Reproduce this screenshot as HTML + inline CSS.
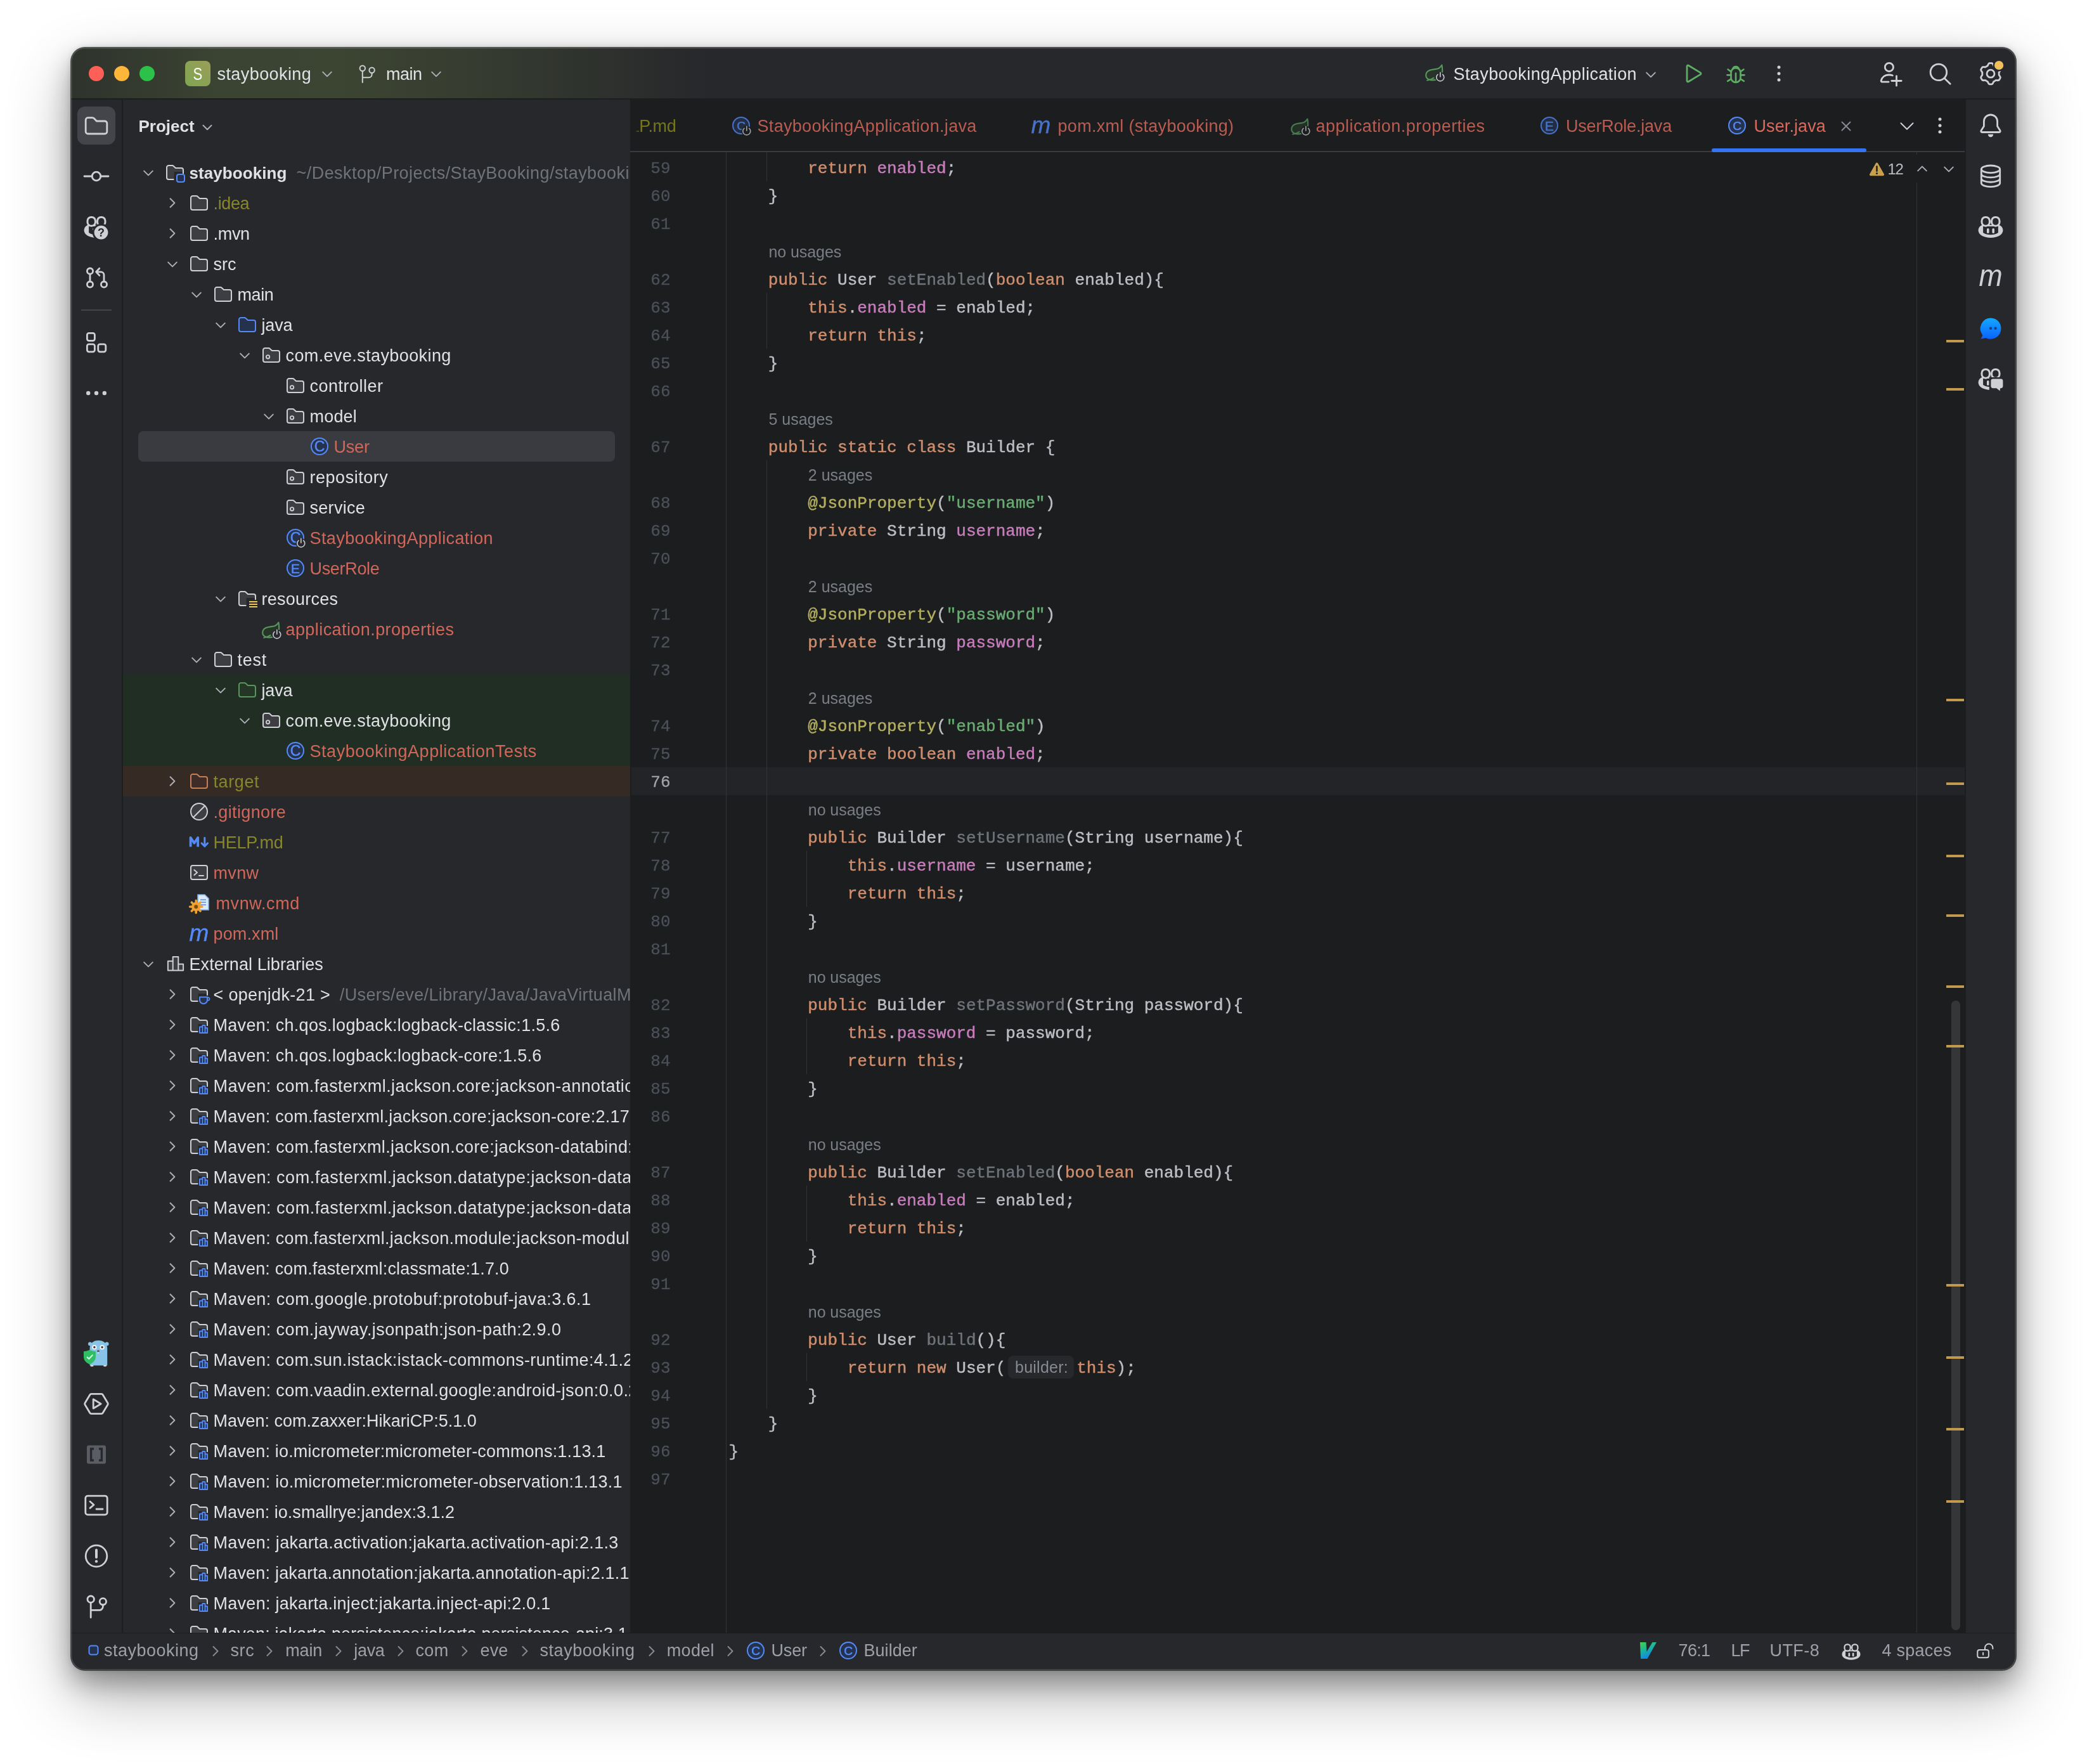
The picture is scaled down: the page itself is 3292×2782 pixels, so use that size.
<!DOCTYPE html>
<html lang="en"><head><meta charset="utf-8"><title>staybooking – User.java</title><style>
html,body{margin:0;padding:0}
body{width:3292px;height:2782px;background:#fff;position:relative;overflow:hidden}
#win{position:absolute;left:112px;top:75px;width:3068px;height:2559px;border-radius:22px;overflow:hidden;background:#27282b;
 box-shadow:0 0 0 1px rgba(0,0,0,.6),0 40px 100px rgba(0,0,0,.3),0 20px 40px rgba(0,0,0,.3),0 0 10px rgba(0,0,0,.15)}
#in{position:absolute;left:-112px;top:-75px;width:3292px;height:2782px;will-change:transform}
#rim{position:absolute;left:112px;top:75px;width:3068px;height:2559px;border-radius:22px;box-shadow:inset 0 0 0 1.500px rgba(255,255,255,.17);pointer-events:none}
.b{position:absolute}
.t{position:absolute;white-space:pre}
.i{position:absolute;overflow:visible}
.c{font:26px/44px "Liberation Mono",monospace;-webkit-text-stroke:.45px}
.n{font:26px/44px "Liberation Mono",monospace;text-align:right;-webkit-text-stroke:.3px}
</style></head>
<body>
<div id="win"><div id="in">
<div class="b" style="left:112px;top:75px;width:3068px;height:81px;background:linear-gradient(90deg,#2e332c 0px,#3b4332 230px,#3c4432 420px,#363c30 640px,#27282b 1000px);"></div>
<div class="b" style="left:112px;top:155px;width:3068px;height:2px;background:#1c1d1f;"></div>
<div class="b" style="left:140px;top:104px;width:24px;height:24px;background:#fe5f57;border-radius:50%"></div>
<div class="b" style="left:180px;top:104px;width:24px;height:24px;background:#fdb53a;border-radius:50%"></div>
<div class="b" style="left:220px;top:104px;width:24px;height:24px;background:#2cc24a;border-radius:50%"></div>
<div class="b" style="left:292px;top:96px;width:40px;height:40px;background:linear-gradient(45deg,#7ea552 0%,#9a9e58 100%);border-radius:8px"></div>
<span class="t" style="left:302.5px;top:96.5px;line-height:40px;font:400 27px/40px 'Liberation Sans', sans-serif;color:#ffffff;letter-spacing:0.32px;transform:scaleX(.82);transform-origin:9px 50%;">S</span>
<span class="t" style="left:342.5px;top:92.5px;line-height:48px;font:400 27px/48px 'Liberation Sans', sans-serif;color:#dfe1e5;letter-spacing:0.42px;">staybooking</span>
<svg class="i" style="left:504.0px;top:105.0px" width="24" height="24" viewBox="0 0 24 24"><path d="M5.2 8.6L12 15.4L18.8 8.6" fill="none" stroke="#acafb6" stroke-width="2" stroke-linecap="round" stroke-linejoin="round"/></svg>
<svg class="i" style="left:563.0px;top:100.5px" width="32" height="32" viewBox="0 0 16 16"><circle cx="4.400" cy="3.400" r="2.100" fill="none" stroke="#ced0d6" stroke-width="1"/><circle cx="11.800" cy="4.900" r="2.100" fill="none" stroke="#ced0d6" stroke-width="1"/><path d="M4.400 5.500v9M11.800 7v1.200a2.400 2.400 0 0 1-2.400 2.400H4.400" fill="none" stroke="#ced0d6" stroke-width="1" stroke-linecap="round"/></svg>
<span class="t" style="left:609.0px;top:92.5px;line-height:48px;font:400 27px/48px 'Liberation Sans', sans-serif;color:#dfe1e5;letter-spacing:-0.48px;">main</span>
<svg class="i" style="left:676.0px;top:105.0px" width="24" height="24" viewBox="0 0 24 24"><path d="M5.2 8.6L12 15.4L18.8 8.6" fill="none" stroke="#acafb6" stroke-width="2" stroke-linecap="round" stroke-linejoin="round"/></svg>
<svg class="i" style="left:2247.0px;top:97.0px" width="36" height="36" viewBox="0 0 18 18"><g transform="translate(-.3 .9) scale(1.06)"><path d="M13.2 1.8c.4 2.4.9 5.2-.3 7.6-1.2 2.5-4 3.7-7 3.6-1.4 0-2.8-.4-3.6-1.2C.9 10.400 1 8.200 2.400 6.700 4.300 4.700 8 5.300 10.600 4.300c1.200-.5 2-1.400 2.600-2.500z" fill="#28332a" stroke="#57965c" stroke-width="1" stroke-linejoin="round"/><path d="M2.300 13.2c1.800-.2 3.400-.8 4.800-1.800" fill="none" stroke="#57965c" stroke-width="1" stroke-linecap="round"/></g><circle cx="12.400" cy="12.450" r="4.100" fill="#27282b"/><path d="M10.470 10.150a3 3 0 1 0 3.860 0" fill="none" stroke="#c3c5cb" stroke-width=".850" stroke-linecap="round"/><path d="M12.400 8.700v3.300" stroke="#c3c5cb" stroke-width=".850" stroke-linecap="round"/></svg>
<span class="t" style="left:2292.5px;top:92.5px;line-height:48px;font:400 27px/48px 'Liberation Sans', sans-serif;color:#dfe1e5;letter-spacing:0.40px;">StaybookingApplication</span>
<svg class="i" style="left:2592.0px;top:106.0px" width="24" height="24" viewBox="0 0 24 24"><path d="M5.2 8.6L12 15.4L18.8 8.6" fill="none" stroke="#acafb6" stroke-width="2" stroke-linecap="round" stroke-linejoin="round"/></svg>
<svg class="i" style="left:2651.0px;top:96.0px" width="40" height="40" viewBox="0 0 20 20"><path d="M5 4.300v11.400a.800.800 0 0 0 1.200.700l9.400-5.700a.800.800 0 0 0 0-1.400L6.200 3.600A.800.800 0 0 0 5 4.300z" fill="none" stroke="#5fad65" stroke-width="1.400" stroke-linejoin="round"/></svg>
<svg class="i" style="left:2718.0px;top:96.5px" width="40" height="40" viewBox="0 0 20 20"><g transform="translate(.6 .8) scale(.94)"><path d="M6 8.500a4 4 0 0 1 8 0v4.200a4 4 0 0 1-8 0z" fill="none" stroke="#5fad65" stroke-width="1.400" stroke-linecap="round" stroke-linejoin="round"/><path d="M7.400 5.400a2.700 2.700 0 0 1 5.200 0" fill="none" stroke="#5fad65" stroke-width="1.400" stroke-linecap="round" stroke-linejoin="round"/><path d="M10 9v7.500M6 10.500H2.800M6 13.800l-2.800 1.800M6 7.600L3.400 5.800M14 10.500h3.200M14 13.800l2.800 1.800M14 7.600l2.600-1.800" fill="none" stroke="#5fad65" stroke-width="1.400" stroke-linecap="round" stroke-linejoin="round"/></g></svg>
<svg class="i" style="left:2786.0px;top:96.0px" width="40" height="40" viewBox="0 0 20 20"><circle cx="10" cy="5" r="1.250" fill="#ced0d6"/><circle cx="10" cy="10" r="1.250" fill="#ced0d6"/><circle cx="10" cy="15" r="1.250" fill="#ced0d6"/></svg>
<svg class="i" style="left:2963.0px;top:96.0px" width="40" height="40" viewBox="0 0 20 20"><circle cx="8.450" cy="4.950" r="3.300" fill="none" stroke="#ced0d6" stroke-width="1.400" stroke-linecap="round" stroke-linejoin="round"/><path d="M8 16.600H2.900a.800.800 0 0 1-.800-.950C2.700 13 5 11 8.450 11c1 0 1.900.180 2.700.500" fill="none" stroke="#ced0d6" stroke-width="1.400" stroke-linecap="round" stroke-linejoin="round"/><path d="M14.250 11.900v7.700M10.400 15.750h7.700" fill="none" stroke="#ced0d6" stroke-width="1.400" stroke-linecap="round" stroke-linejoin="round"/></svg>
<svg class="i" style="left:3041.0px;top:96.0px" width="40" height="40" viewBox="0 0 20 20"><circle cx="8.450" cy="8.950" r="6.400" fill="none" stroke="#ced0d6" stroke-width="1.400" stroke-linecap="round" stroke-linejoin="round"/><path d="M13.100 13.700l4.500 4.400" fill="none" stroke="#ced0d6" stroke-width="1.400" stroke-linecap="round" stroke-linejoin="round"/></svg>
<svg class="i" style="left:3120.0px;top:96.0px" width="40" height="40" viewBox="0 0 20 20"><path d="M10.00 1.80L10.36 1.81L10.72 1.83L11.08 1.87L11.41 2.09L11.69 2.48L11.93 2.90L12.13 3.33L12.32 3.74L12.53 4.00L12.79 4.12L13.05 4.25L13.30 4.38L13.55 4.53L13.79 4.69L14.02 4.86L14.35 4.91L14.80 4.87L15.27 4.83L15.75 4.83L16.23 4.87L16.58 5.05L16.80 5.34L17.00 5.64L17.19 5.95L17.36 6.27L17.52 6.59L17.67 6.92L17.64 7.32L17.44 7.75L17.20 8.17L16.93 8.56L16.67 8.92L16.54 9.24L16.57 9.52L16.59 9.81L16.60 10.10L16.59 10.39L16.57 10.68L16.54 10.96L16.67 11.28L16.93 11.64L17.20 12.03L17.44 12.45L17.64 12.88L17.67 13.28L17.52 13.61L17.36 13.93L17.19 14.25L17.00 14.56L16.80 14.86L16.58 15.15L16.23 15.33L15.75 15.37L15.27 15.37L14.80 15.33L14.35 15.29L14.02 15.34L13.79 15.51L13.55 15.67L13.30 15.82L13.05 15.95L12.79 16.08L12.53 16.20L12.32 16.46L12.13 16.87L11.93 17.30L11.69 17.72L11.41 18.11L11.08 18.33L10.72 18.37L10.36 18.39L10.00 18.40L9.64 18.39L9.28 18.37L8.92 18.33L8.59 18.11L8.31 17.72L8.07 17.30L7.87 16.87L7.68 16.46L7.47 16.20L7.21 16.08L6.95 15.95L6.70 15.82L6.45 15.67L6.21 15.51L5.98 15.34L5.65 15.29L5.20 15.33L4.73 15.37L4.25 15.37L3.77 15.33L3.42 15.15L3.20 14.86L3.00 14.56L2.81 14.25L2.64 13.93L2.48 13.61L2.33 13.28L2.36 12.88L2.56 12.45L2.80 12.03L3.07 11.64L3.33 11.28L3.46 10.96L3.43 10.68L3.41 10.39L3.40 10.10L3.41 9.81L3.43 9.52L3.46 9.24L3.33 8.92L3.07 8.56L2.80 8.17L2.56 7.75L2.36 7.32L2.33 6.92L2.48 6.59L2.64 6.27L2.81 5.95L3.00 5.64L3.20 5.34L3.42 5.05L3.77 4.87L4.25 4.83L4.73 4.83L5.20 4.87L5.65 4.91L5.98 4.86L6.21 4.69L6.45 4.53L6.70 4.38L6.95 4.25L7.21 4.12L7.47 4.00L7.68 3.74L7.87 3.33L8.07 2.90L8.31 2.48L8.59 2.09L8.92 1.87L9.28 1.83L9.64 1.81z" fill="none" stroke="#ced0d6" stroke-width="1.400" stroke-linecap="round" stroke-linejoin="round"/><circle cx="10" cy="10.100" r="3" fill="none" stroke="#ced0d6" stroke-width="1.400" stroke-linecap="round" stroke-linejoin="round"/><circle cx="16.550" cy="3.500" r="4.750" fill="#27282b"/><circle cx="16.550" cy="3.500" r="3.550" fill="#f2c05c"/></svg>
<div class="b" style="left:112px;top:157px;width:81px;height:2418px;background:#27282b;"></div>
<div class="b" style="left:192px;top:157px;width:2px;height:2418px;background:#1c1d1f;"></div>
<div class="b" style="left:122px;top:168px;width:60px;height:60px;background:#43454a;border-radius:12px"></div>
<svg class="i" style="left:132.0px;top:178.0px" width="40" height="40" viewBox="0 0 20 20"><path d="M1.600 5.600A1.800 1.800 0 0 1 3.400 3.800h3.500a1.800 1.800 0 0 1 1.300.56L10.200 6.500h6.400A1.800 1.800 0 0 1 18.400 8.300v6.400a1.800 1.800 0 0 1-1.800 1.800H3.400a1.800 1.800 0 0 1-1.800-1.800z" fill="none" stroke="#ced0d6" stroke-width="1.400" stroke-linecap="round" stroke-linejoin="round"/></svg>
<svg class="i" style="left:132.0px;top:258.0px" width="40" height="40" viewBox="0 0 20 20"><circle cx="10" cy="10" r="3.400" fill="none" stroke="#ced0d6" stroke-width="1.400" stroke-linecap="round" stroke-linejoin="round"/><path d="M0.500 10h6.100M13.400 10h6.100" fill="none" stroke="#ced0d6" stroke-width="1.400" stroke-linecap="round" stroke-linejoin="round"/></svg>
<svg class="i" style="left:132.0px;top:338.0px" width="40" height="40" viewBox="0 0 20 20"><path d="M.300 12.600C.300 10.600 1.600 9.200 3.200 8.400H16.800C18.400 9.200 19.700 10.600 19.700 12.600 19.700 16 15.500 18.450 10 18.450S.300 16 .300 12.600z" fill="#ced0d6"/><path d="M4.050 9.500H15.950V14.550C14.300 15.600 12.200 16.150 10 16.150S5.700 15.600 4.050 14.550z" fill="#27282b"/><rect x="7" y="10.950" width="1.800" height="4.050" rx=".900" fill="#ced0d6"/><rect x="3" y="2.200" width="6.200" height="6.900" rx="2.900" fill="#27282b" stroke="#ced0d6" stroke-width="1.500"/><rect x="10.800" y="2.200" width="6.200" height="6.900" rx="2.900" fill="#27282b" stroke="#ced0d6" stroke-width="1.500"/><circle cx="13.750" cy="14.300" r="6.900" fill="#27282b"/><circle cx="13.750" cy="14.300" r="5.450" fill="#ced0d6"/><text x="13.750" y="17.500" font-family="Liberation Sans, sans-serif" font-weight="700" font-size="9" text-anchor="middle" fill="#27282b">?</text></svg>
<svg class="i" style="left:132.0px;top:418.0px" width="40" height="40" viewBox="0 0 20 20"><circle cx="5" cy="4.800" r="2.300" fill="none" stroke="#ced0d6" stroke-width="1.400" stroke-linecap="round" stroke-linejoin="round"/><circle cx="5" cy="15.300" r="2.300" fill="none" stroke="#ced0d6" stroke-width="1.400" stroke-linecap="round" stroke-linejoin="round"/><circle cx="16" cy="15.300" r="2.300" fill="none" stroke="#ced0d6" stroke-width="1.400" stroke-linecap="round" stroke-linejoin="round"/><path d="M5 7.100v5.900M16 13v-5.200a2.400 2.400 0 0 0-2.400-2.400h-3.400M12.400 2.600L9.800 5.400l2.600 2.800" fill="none" stroke="#ced0d6" stroke-width="1.400" stroke-linecap="round" stroke-linejoin="round"/></svg>
<div class="b" style="left:128px;top:488px;width:48px;height:2px;background:#43454a;"></div>
<svg class="i" style="left:132.0px;top:520.0px" width="40" height="40" viewBox="0 0 20 20"><rect x="2.700" y="2.700" width="6" height="6" rx="1.400" fill="none" stroke="#ced0d6" stroke-width="1.400" stroke-linecap="round" stroke-linejoin="round"/><rect x="2.700" y="11.400" width="6" height="6" rx="1.400" fill="none" stroke="#ced0d6" stroke-width="1.400" stroke-linecap="round" stroke-linejoin="round"/><rect x="11.400" y="11.400" width="6" height="6" rx="1.400" fill="none" stroke="#ced0d6" stroke-width="1.400" stroke-linecap="round" stroke-linejoin="round"/></svg>
<svg class="i" style="left:132.0px;top:600.0px" width="40" height="40" viewBox="0 0 20 20"><circle cx="3.6" cy="10" r="1.600" fill="#ced0d6"/><circle cx="10" cy="10" r="1.600" fill="#ced0d6"/><circle cx="16.4" cy="10" r="1.600" fill="#ced0d6"/></svg>
<svg class="i" style="left:132.0px;top:2114.0px" width="40" height="40" viewBox="0 0 20 20"><circle cx="5" cy="2.700" r="1.500" fill="#87c4e8"/><circle cx="18.300" cy="2.700" r="1.500" fill="#87c4e8"/><path d="M4.800 19.800V6.400c0-4 2.600-6.400 6.800-6.400s7 2.400 7 6.400v13.400z" fill="#87c4e8"/><ellipse cx="6.500" cy="20" rx="1.300" ry=".600" fill="#e8d5c8"/><ellipse cx="16.800" cy="20" rx="1.300" ry=".600" fill="#e8d5c8"/><circle cx="8.450" cy="5.350" r="1.900" fill="#f1f1f1"/><circle cx="14.550" cy="5.350" r="1.900" fill="#f1f1f1"/><circle cx="8.450" cy="5.350" r=".850" fill="#3a3a3a"/><circle cx="14.550" cy="5.350" r=".850" fill="#3a3a3a"/><ellipse cx="11.500" cy="8.400" rx="1" ry=".750" fill="#6b4a3a"/><rect x="10.900" y="9.200" width="1.200" height="1.300" rx=".300" fill="#b5dcf3"/><path d="M0 8.600c1.800-.1 3.400-.500 4.750-1.200 1.350.700 2.900 1.100 4.700 1.200v4.200c0 2.800-1.800 4.900-4.700 6.100C1.800 17.700 0 15.600 0 12.800z" fill="#2ebe64"/><path d="M2.900 13.300l1.300 1.200 2.700-2.900" fill="none" stroke="#d8f5e2" stroke-width="1.100" stroke-linecap="round"/></svg>
<svg class="i" style="left:132.0px;top:2194.0px" width="40" height="40" viewBox="0 0 20 20"><path d="M6 2.200h8a1.300 1.300 0 0 1 1.100.65l3.900 6.500a1.300 1.300 0 0 1 0 1.300l-3.900 6.500a1.300 1.300 0 0 1-1.100.65h-8a1.300 1.300 0 0 1-1.100-.65L1 10.650a1.300 1.300 0 0 1 0-1.300l3.900-6.500A1.300 1.300 0 0 1 6 2.200z" fill="none" stroke="#ced0d6" stroke-width="1.400" stroke-linecap="round" stroke-linejoin="round"/><path d="M7.600 6.400v7.200L13.600 10z" fill="none" stroke="#ced0d6" stroke-width="1.400" stroke-linecap="round" stroke-linejoin="round"/></svg>
<svg class="i" style="left:132.0px;top:2274.0px" width="40" height="40" viewBox="0 0 20 20"><rect x="2.500" y="2.700" width="15" height="14.600" rx="1.500" fill="#5a5d63"/><path d="M8 5.500H5.800v9H8M12 5.500h2.200v9H12" fill="none" stroke="#27282b" stroke-width="1.700"/></svg>
<svg class="i" style="left:132.0px;top:2354.0px" width="40" height="40" viewBox="0 0 20 20"><rect x="1.400" y="2.600" width="17.200" height="14.800" rx="1.800" fill="none" stroke="#ced0d6" stroke-width="1.400" stroke-linecap="round" stroke-linejoin="round"/><path d="M5 7l3 2.600L5 12.200M10 13h5" fill="none" stroke="#ced0d6" stroke-width="1.400" stroke-linecap="round" stroke-linejoin="round"/></svg>
<svg class="i" style="left:132.0px;top:2434.0px" width="40" height="40" viewBox="0 0 20 20"><circle cx="10" cy="10" r="8.400" fill="none" stroke="#ced0d6" stroke-width="1.400" stroke-linecap="round" stroke-linejoin="round"/><path d="M10 5.300v5.700" fill="none" stroke="#ced0d6" stroke-width="2" stroke-linecap="round"/><circle cx="10" cy="14.200" r="1.100" fill="#ced0d6"/></svg>
<svg class="i" style="left:132.0px;top:2513.0px" width="40" height="40" viewBox="0 0 20 20"><circle cx="5.600" cy="4.600" r="2.600" fill="none" stroke="#ced0d6" stroke-width="1.400" stroke-linecap="round" stroke-linejoin="round"/><circle cx="15.200" cy="6.400" r="2.600" fill="none" stroke="#ced0d6" stroke-width="1.400" stroke-linecap="round" stroke-linejoin="round"/><path d="M5.600 7.200V19M15.200 9v1.200a3 3 0 0 1-3 3H5.600" fill="none" stroke="#ced0d6" stroke-width="1.400" stroke-linecap="round" stroke-linejoin="round"/></svg>
<div class="b" style="left:194px;top:157px;width:800px;height:2418px;background:#27282b;overflow:hidden"><div style="position:absolute;left:-194px;top:-157px">
<span class="t" style="left:218.5px;top:175.0px;line-height:48px;font:700 26px/48px 'Liberation Sans', sans-serif;color:#dfe1e5;letter-spacing:0.01px;">Project</span>
<svg class="i" style="left:315.0px;top:188.5px" width="24" height="24" viewBox="0 0 24 24"><path d="M5.5 8.75L12 15.25L18.5 8.75" fill="none" stroke="#acafb6" stroke-width="2" stroke-linecap="round" stroke-linejoin="round"/></svg>
<svg class="i" style="left:222.0px;top:260.5px" width="24" height="24" viewBox="0 0 24 24"><path d="M5.2 8.6L12 15.4L18.8 8.6" fill="none" stroke="#acafb6" stroke-width="2" stroke-linecap="round" stroke-linejoin="round"/></svg>
<svg class="i" style="left:260.0px;top:256.0px" width="32" height="32" viewBox="0 0 16 16"><path d="M1.5 4A1.5 1.5 0 0 1 3 2.5h2.8a1.5 1.5 0 0 1 1.1.48L8.5 4.5H13A1.5 1.5 0 0 1 14.5 6v1.500H7.300v6H3A1.5 1.5 0 0 1 1.5 12z" fill="#3c3e42"/><path d="M6.800 13.5H3A1.5 1.5 0 0 1 1.5 12V4A1.5 1.5 0 0 1 3 2.5h2.8a1.5 1.5 0 0 1 1.1.48L8.5 4.5H13A1.5 1.5 0 0 1 14.5 6v2.600" fill="none" stroke="#ced0d6" stroke-width="1" stroke-linecap="round"/><rect x="9.5" y="9.5" width="6" height="6" rx="1.5" fill="#25324d" stroke="#548af7" stroke-width="1"/></svg>
<span class="t" style="left:298.5px;top:249.3px;line-height:48px;font:700 26px/48px 'Liberation Sans', sans-serif;color:#dfe1e5;letter-spacing:0.08px;">staybooking</span>
<span class="t" style="left:467.6px;top:249.3px;line-height:48px;font:400 27px/48px 'Liberation Sans', sans-serif;color:#6f737a;letter-spacing:0.43px;">~/Desktop/Projects/StayBooking/staybooking</span>
<svg class="i" style="left:259.6px;top:308.3px" width="24" height="24" viewBox="0 0 24 24"><path d="M8.6 5.2L15.4 12L8.6 18.8" fill="none" stroke="#acafb6" stroke-width="2" stroke-linecap="round" stroke-linejoin="round"/></svg>
<svg class="i" style="left:298.0px;top:304.0px" width="32" height="32" viewBox="0 0 16 16"><path d="M1.5 4A1.5 1.5 0 0 1 3 2.5h2.8a1.5 1.5 0 0 1 1.1.48L8.5 4.5H13A1.5 1.5 0 0 1 14.5 6v6a1.5 1.5 0 0 1-1.5 1.5H3A1.5 1.5 0 0 1 1.5 12z" fill="#3c3e42" stroke="#ced0d6" stroke-width="1"/></svg>
<span class="t" style="left:336.5px;top:297.3px;line-height:48px;font:400 27px/48px 'Liberation Sans', sans-serif;color:#87862a;letter-spacing:-0.37px;">.idea</span>
<svg class="i" style="left:259.6px;top:356.3px" width="24" height="24" viewBox="0 0 24 24"><path d="M8.6 5.2L15.4 12L8.6 18.8" fill="none" stroke="#acafb6" stroke-width="2" stroke-linecap="round" stroke-linejoin="round"/></svg>
<svg class="i" style="left:298.0px;top:352.0px" width="32" height="32" viewBox="0 0 16 16"><path d="M1.5 4A1.5 1.5 0 0 1 3 2.5h2.8a1.5 1.5 0 0 1 1.1.48L8.5 4.5H13A1.5 1.5 0 0 1 14.5 6v6a1.5 1.5 0 0 1-1.5 1.5H3A1.5 1.5 0 0 1 1.5 12z" fill="#3c3e42" stroke="#ced0d6" stroke-width="1"/></svg>
<span class="t" style="left:336.5px;top:345.3px;line-height:48px;font:400 27px/48px 'Liberation Sans', sans-serif;color:#dfe1e5;letter-spacing:-0.30px;">.mvn</span>
<svg class="i" style="left:260.0px;top:404.5px" width="24" height="24" viewBox="0 0 24 24"><path d="M5.2 8.6L12 15.4L18.8 8.6" fill="none" stroke="#acafb6" stroke-width="2" stroke-linecap="round" stroke-linejoin="round"/></svg>
<svg class="i" style="left:298.0px;top:400.0px" width="32" height="32" viewBox="0 0 16 16"><path d="M1.5 4A1.5 1.5 0 0 1 3 2.5h2.8a1.5 1.5 0 0 1 1.1.48L8.5 4.5H13A1.5 1.5 0 0 1 14.5 6v6a1.5 1.5 0 0 1-1.5 1.5H3A1.5 1.5 0 0 1 1.5 12z" fill="#3c3e42" stroke="#ced0d6" stroke-width="1"/></svg>
<span class="t" style="left:336.5px;top:393.3px;line-height:48px;font:400 27px/48px 'Liberation Sans', sans-serif;color:#dfe1e5;letter-spacing:0.00px;">src</span>
<svg class="i" style="left:298.0px;top:452.5px" width="24" height="24" viewBox="0 0 24 24"><path d="M5.2 8.6L12 15.4L18.8 8.6" fill="none" stroke="#acafb6" stroke-width="2" stroke-linecap="round" stroke-linejoin="round"/></svg>
<svg class="i" style="left:336.0px;top:448.0px" width="32" height="32" viewBox="0 0 16 16"><path d="M1.5 4A1.5 1.5 0 0 1 3 2.5h2.8a1.5 1.5 0 0 1 1.1.48L8.5 4.5H13A1.5 1.5 0 0 1 14.5 6v6a1.5 1.5 0 0 1-1.5 1.5H3A1.5 1.5 0 0 1 1.5 12z" fill="#3c3e42" stroke="#ced0d6" stroke-width="1"/></svg>
<span class="t" style="left:374.5px;top:441.3px;line-height:48px;font:400 27px/48px 'Liberation Sans', sans-serif;color:#dfe1e5;letter-spacing:-0.38px;">main</span>
<svg class="i" style="left:336.0px;top:500.5px" width="24" height="24" viewBox="0 0 24 24"><path d="M5.2 8.6L12 15.4L18.8 8.6" fill="none" stroke="#acafb6" stroke-width="2" stroke-linecap="round" stroke-linejoin="round"/></svg>
<svg class="i" style="left:374.0px;top:496.0px" width="32" height="32" viewBox="0 0 16 16"><path d="M1.5 4A1.5 1.5 0 0 1 3 2.5h2.8a1.5 1.5 0 0 1 1.1.48L8.5 4.5H13A1.5 1.5 0 0 1 14.5 6v6a1.5 1.5 0 0 1-1.5 1.5H3A1.5 1.5 0 0 1 1.5 12z" fill="#25324d" stroke="#548af7" stroke-width="1"/></svg>
<span class="t" style="left:412.5px;top:489.3px;line-height:48px;font:400 27px/48px 'Liberation Sans', sans-serif;color:#dfe1e5;letter-spacing:-0.13px;">java</span>
<svg class="i" style="left:374.0px;top:548.5px" width="24" height="24" viewBox="0 0 24 24"><path d="M5.2 8.6L12 15.4L18.8 8.6" fill="none" stroke="#acafb6" stroke-width="2" stroke-linecap="round" stroke-linejoin="round"/></svg>
<svg class="i" style="left:412.0px;top:544.0px" width="32" height="32" viewBox="0 0 16 16"><path d="M1.5 4A1.5 1.5 0 0 1 3 2.5h2.8a1.5 1.5 0 0 1 1.1.48L8.5 4.5H13A1.5 1.5 0 0 1 14.5 6v6a1.5 1.5 0 0 1-1.5 1.5H3A1.5 1.5 0 0 1 1.5 12z" fill="#3c3e42" stroke="#ced0d6" stroke-width="1"/><circle cx="5.3" cy="9.4" r="1.35" fill="none" stroke="#ced0d6" stroke-width="0.9"/></svg>
<span class="t" style="left:450.5px;top:537.3px;line-height:48px;font:400 27px/48px 'Liberation Sans', sans-serif;color:#dfe1e5;letter-spacing:0.40px;">com.eve.staybooking</span>
<svg class="i" style="left:450.0px;top:592.0px" width="32" height="32" viewBox="0 0 16 16"><path d="M1.5 4A1.5 1.5 0 0 1 3 2.5h2.8a1.5 1.5 0 0 1 1.1.48L8.5 4.5H13A1.5 1.5 0 0 1 14.5 6v6a1.5 1.5 0 0 1-1.5 1.5H3A1.5 1.5 0 0 1 1.5 12z" fill="#3c3e42" stroke="#ced0d6" stroke-width="1"/><circle cx="5.3" cy="9.4" r="1.35" fill="none" stroke="#ced0d6" stroke-width="0.9"/></svg>
<span class="t" style="left:488.5px;top:585.3px;line-height:48px;font:400 27px/48px 'Liberation Sans', sans-serif;color:#dfe1e5;letter-spacing:0.50px;">controller</span>
<svg class="i" style="left:412.0px;top:644.5px" width="24" height="24" viewBox="0 0 24 24"><path d="M5.2 8.6L12 15.4L18.8 8.6" fill="none" stroke="#acafb6" stroke-width="2" stroke-linecap="round" stroke-linejoin="round"/></svg>
<svg class="i" style="left:450.0px;top:640.0px" width="32" height="32" viewBox="0 0 16 16"><path d="M1.5 4A1.5 1.5 0 0 1 3 2.5h2.8a1.5 1.5 0 0 1 1.1.48L8.5 4.5H13A1.5 1.5 0 0 1 14.5 6v6a1.5 1.5 0 0 1-1.5 1.5H3A1.5 1.5 0 0 1 1.5 12z" fill="#3c3e42" stroke="#ced0d6" stroke-width="1"/><circle cx="5.3" cy="9.4" r="1.35" fill="none" stroke="#ced0d6" stroke-width="0.9"/></svg>
<span class="t" style="left:488.5px;top:633.3px;line-height:48px;font:400 27px/48px 'Liberation Sans', sans-serif;color:#dfe1e5;letter-spacing:0.19px;">model</span>
<div class="b" style="left:218px;top:680px;width:752px;height:48px;background:#393b40;border-radius:8px"></div>
<svg class="i" style="left:488.0px;top:688.0px" width="32" height="32" viewBox="0 0 16 16"><circle cx="8" cy="8" r="6.5" fill="#25324d" stroke="#548af7" stroke-width="1"/><text x="8.05" y="12.1" font-family="Liberation Sans, sans-serif" font-size="11.5" text-anchor="middle" fill="#548af7" stroke="#548af7" stroke-width=".25">C</text></svg>
<span class="t" style="left:526.5px;top:681.3px;line-height:48px;font:400 27px/48px 'Liberation Sans', sans-serif;color:#d1675a;letter-spacing:-0.20px;">User</span>
<svg class="i" style="left:450.0px;top:736.0px" width="32" height="32" viewBox="0 0 16 16"><path d="M1.5 4A1.5 1.5 0 0 1 3 2.5h2.8a1.5 1.5 0 0 1 1.1.48L8.5 4.5H13A1.5 1.5 0 0 1 14.5 6v6a1.5 1.5 0 0 1-1.5 1.5H3A1.5 1.5 0 0 1 1.5 12z" fill="#3c3e42" stroke="#ced0d6" stroke-width="1"/><circle cx="5.3" cy="9.4" r="1.35" fill="none" stroke="#ced0d6" stroke-width="0.9"/></svg>
<span class="t" style="left:488.5px;top:729.3px;line-height:48px;font:400 27px/48px 'Liberation Sans', sans-serif;color:#dfe1e5;letter-spacing:0.53px;">repository</span>
<svg class="i" style="left:450.0px;top:784.0px" width="32" height="32" viewBox="0 0 16 16"><path d="M1.5 4A1.5 1.5 0 0 1 3 2.5h2.8a1.5 1.5 0 0 1 1.1.48L8.5 4.5H13A1.5 1.5 0 0 1 14.5 6v6a1.5 1.5 0 0 1-1.5 1.5H3A1.5 1.5 0 0 1 1.5 12z" fill="#3c3e42" stroke="#ced0d6" stroke-width="1"/><circle cx="5.3" cy="9.4" r="1.35" fill="none" stroke="#ced0d6" stroke-width="0.9"/></svg>
<span class="t" style="left:488.5px;top:777.3px;line-height:48px;font:400 27px/48px 'Liberation Sans', sans-serif;color:#dfe1e5;letter-spacing:0.30px;">service</span>
<svg class="i" style="left:450.0px;top:832.0px" width="32" height="32" viewBox="0 0 16 16"><circle cx="8" cy="8" r="6.5" fill="#25324d" stroke="#548af7" stroke-width="1"/><text x="8.05" y="12.1" font-family="Liberation Sans, sans-serif" font-size="11.5" text-anchor="middle" fill="#548af7" stroke="#548af7" stroke-width=".25">C</text><circle cx="12.400" cy="12.450" r="4.100" fill="#27282b"/><path d="M10.470 10.150a3 3 0 1 0 3.860 0" fill="none" stroke="#c3c5cb" stroke-width=".850" stroke-linecap="round"/><path d="M12.400 8.700v3.300" stroke="#c3c5cb" stroke-width=".850" stroke-linecap="round"/></svg>
<span class="t" style="left:488.5px;top:825.3px;line-height:48px;font:400 27px/48px 'Liberation Sans', sans-serif;color:#d1675a;letter-spacing:0.40px;">StaybookingApplication</span>
<svg class="i" style="left:450.0px;top:880.0px" width="32" height="32" viewBox="0 0 16 16"><circle cx="8" cy="8" r="6.5" fill="#25324d" stroke="#548af7" stroke-width="1"/><text x="8" y="11.75" font-family="Liberation Sans, sans-serif" font-size="10.4" text-anchor="middle" fill="#548af7" stroke="#548af7" stroke-width=".25">E</text></svg>
<span class="t" style="left:488.5px;top:873.3px;line-height:48px;font:400 27px/48px 'Liberation Sans', sans-serif;color:#d1675a;letter-spacing:-0.32px;">UserRole</span>
<svg class="i" style="left:336.0px;top:932.5px" width="24" height="24" viewBox="0 0 24 24"><path d="M5.2 8.6L12 15.4L18.8 8.6" fill="none" stroke="#acafb6" stroke-width="2" stroke-linecap="round" stroke-linejoin="round"/></svg>
<svg class="i" style="left:374.0px;top:928.0px" width="32" height="32" viewBox="0 0 16 16"><path d="M1.5 4A1.5 1.5 0 0 1 3 2.5h2.8a1.5 1.5 0 0 1 1.1.48L8.5 4.5H13A1.5 1.5 0 0 1 14.5 6v1.500H7.300v6H3A1.5 1.5 0 0 1 1.5 12z" fill="#3c3e42"/><path d="M6.800 13.5H3A1.5 1.5 0 0 1 1.5 12V4A1.5 1.5 0 0 1 3 2.5h2.8a1.5 1.5 0 0 1 1.1.48L8.5 4.5H13A1.5 1.5 0 0 1 14.5 6v2.600" fill="none" stroke="#ced0d6" stroke-width="1" stroke-linecap="round"/><path d="M9.500 10.5h6.500" stroke="#f2c55c" stroke-width="1"/><path d="M9.500 12.5h6.500" stroke="#f2c55c" stroke-width="1"/><path d="M9.500 14.5h6.500" stroke="#f2c55c" stroke-width="1"/></svg>
<span class="t" style="left:412.5px;top:921.3px;line-height:48px;font:400 27px/48px 'Liberation Sans', sans-serif;color:#dfe1e5;letter-spacing:0.23px;">resources</span>
<svg class="i" style="left:412.0px;top:976.0px" width="32" height="32" viewBox="0 0 16 16"><g transform="translate(-.3 .9) scale(1.06)"><path d="M13.2 1.8c.4 2.4.9 5.2-.3 7.6-1.2 2.5-4 3.7-7 3.6-1.4 0-2.8-.4-3.6-1.2C.9 10.400 1 8.200 2.400 6.700 4.300 4.700 8 5.300 10.600 4.300c1.200-.5 2-1.400 2.600-2.500z" fill="#253627" stroke="#57965c" stroke-width="1" stroke-linejoin="round"/><path d="M2.300 13.2c1.800-.2 3.400-.8 4.800-1.800" fill="none" stroke="#57965c" stroke-width="1" stroke-linecap="round"/></g><circle cx="12.400" cy="12.450" r="4.100" fill="#27282b"/><path d="M10.470 10.150a3 3 0 1 0 3.860 0" fill="none" stroke="#c3c5cb" stroke-width=".850" stroke-linecap="round"/><path d="M12.400 8.700v3.300" stroke="#c3c5cb" stroke-width=".850" stroke-linecap="round"/></svg>
<span class="t" style="left:450.5px;top:969.3px;line-height:48px;font:400 27px/48px 'Liberation Sans', sans-serif;color:#d1675a;letter-spacing:0.42px;">application.properties</span>
<svg class="i" style="left:298.0px;top:1028.5px" width="24" height="24" viewBox="0 0 24 24"><path d="M5.2 8.6L12 15.4L18.8 8.6" fill="none" stroke="#acafb6" stroke-width="2" stroke-linecap="round" stroke-linejoin="round"/></svg>
<svg class="i" style="left:336.0px;top:1024.0px" width="32" height="32" viewBox="0 0 16 16"><path d="M1.5 4A1.5 1.5 0 0 1 3 2.5h2.8a1.5 1.5 0 0 1 1.1.48L8.5 4.5H13A1.5 1.5 0 0 1 14.5 6v6a1.5 1.5 0 0 1-1.5 1.5H3A1.5 1.5 0 0 1 1.5 12z" fill="#3c3e42" stroke="#ced0d6" stroke-width="1"/></svg>
<span class="t" style="left:374.5px;top:1017.3px;line-height:48px;font:400 27px/48px 'Liberation Sans', sans-serif;color:#dfe1e5;letter-spacing:0.72px;">test</span>
<div class="b" style="left:194px;top:1064px;width:800px;height:48px;background:#212e24;"></div>
<svg class="i" style="left:336.0px;top:1076.5px" width="24" height="24" viewBox="0 0 24 24"><path d="M5.2 8.6L12 15.4L18.8 8.6" fill="none" stroke="#acafb6" stroke-width="2" stroke-linecap="round" stroke-linejoin="round"/></svg>
<svg class="i" style="left:374.0px;top:1072.0px" width="32" height="32" viewBox="0 0 16 16"><path d="M1.5 4A1.5 1.5 0 0 1 3 2.5h2.8a1.5 1.5 0 0 1 1.1.48L8.5 4.5H13A1.5 1.5 0 0 1 14.5 6v6a1.5 1.5 0 0 1-1.5 1.5H3A1.5 1.5 0 0 1 1.5 12z" fill="#253627" stroke="#57965c" stroke-width="1"/></svg>
<span class="t" style="left:412.5px;top:1065.3px;line-height:48px;font:400 27px/48px 'Liberation Sans', sans-serif;color:#dfe1e5;letter-spacing:-0.13px;">java</span>
<div class="b" style="left:194px;top:1112px;width:800px;height:48px;background:#212e24;"></div>
<svg class="i" style="left:374.0px;top:1124.5px" width="24" height="24" viewBox="0 0 24 24"><path d="M5.2 8.6L12 15.4L18.8 8.6" fill="none" stroke="#acafb6" stroke-width="2" stroke-linecap="round" stroke-linejoin="round"/></svg>
<svg class="i" style="left:412.0px;top:1120.0px" width="32" height="32" viewBox="0 0 16 16"><path d="M1.5 4A1.5 1.5 0 0 1 3 2.5h2.8a1.5 1.5 0 0 1 1.1.48L8.5 4.5H13A1.5 1.5 0 0 1 14.5 6v6a1.5 1.5 0 0 1-1.5 1.5H3A1.5 1.5 0 0 1 1.5 12z" fill="#3c3e42" stroke="#ced0d6" stroke-width="1"/><circle cx="5.3" cy="9.4" r="1.35" fill="none" stroke="#ced0d6" stroke-width="0.9"/></svg>
<span class="t" style="left:450.5px;top:1113.3px;line-height:48px;font:400 27px/48px 'Liberation Sans', sans-serif;color:#dfe1e5;letter-spacing:0.40px;">com.eve.staybooking</span>
<div class="b" style="left:194px;top:1160px;width:800px;height:48px;background:#212e24;"></div>
<svg class="i" style="left:450.0px;top:1168.0px" width="32" height="32" viewBox="0 0 16 16"><circle cx="8" cy="8" r="6.5" fill="#25324d" stroke="#548af7" stroke-width="1"/><text x="8.05" y="12.1" font-family="Liberation Sans, sans-serif" font-size="11.5" text-anchor="middle" fill="#548af7" stroke="#548af7" stroke-width=".25">C</text></svg>
<span class="t" style="left:488.5px;top:1161.3px;line-height:48px;font:400 27px/48px 'Liberation Sans', sans-serif;color:#d1675a;letter-spacing:0.54px;">StaybookingApplicationTests</span>
<div class="b" style="left:194px;top:1208px;width:800px;height:48px;background:#362b24;"></div>
<svg class="i" style="left:259.6px;top:1220.3px" width="24" height="24" viewBox="0 0 24 24"><path d="M8.6 5.2L15.4 12L8.6 18.8" fill="none" stroke="#acafb6" stroke-width="2" stroke-linecap="round" stroke-linejoin="round"/></svg>
<svg class="i" style="left:298.0px;top:1216.0px" width="32" height="32" viewBox="0 0 16 16"><path d="M1.5 4A1.5 1.5 0 0 1 3 2.5h2.8a1.5 1.5 0 0 1 1.1.48L8.5 4.5H13A1.5 1.5 0 0 1 14.5 6v6a1.5 1.5 0 0 1-1.5 1.5H3A1.5 1.5 0 0 1 1.5 12z" fill="#3e2c28" stroke="#c77d55" stroke-width="1"/></svg>
<span class="t" style="left:336.5px;top:1209.3px;line-height:48px;font:400 27px/48px 'Liberation Sans', sans-serif;color:#87862a;letter-spacing:0.61px;">target</span>
<svg class="i" style="left:298.0px;top:1264.0px" width="32" height="32" viewBox="0 0 16 16"><circle cx="8" cy="8" r="6.5" fill="#3c3e42" stroke="#ced0d6" stroke-width="1"/><path d="M3.600 12.4l8.800-8.800" stroke="#ced0d6" stroke-width="1"/></svg>
<span class="t" style="left:336.5px;top:1257.3px;line-height:48px;font:400 27px/48px 'Liberation Sans', sans-serif;color:#d1675a;letter-spacing:0.36px;">.gitignore</span>
<svg class="i" style="left:298.0px;top:1312.0px" width="32" height="32" viewBox="0 0 16 16"><path d="M1.300 11.700v-7.200l2.900 4.300 2.900-4.300v7.200" fill="none" stroke="#548af7" stroke-width="1.900" stroke-linejoin="round" stroke-linecap="butt"/><path d="M12.400 4.600v6.600M10 8.900l2.400 2.500 2.400-2.500" fill="none" stroke="#548af7" stroke-width="1.500" stroke-linecap="round" stroke-linejoin="round"/></svg>
<span class="t" style="left:336.5px;top:1305.3px;line-height:48px;font:400 27px/48px 'Liberation Sans', sans-serif;color:#87862a;letter-spacing:-0.29px;">HELP.md</span>
<svg class="i" style="left:298.0px;top:1360.0px" width="32" height="32" viewBox="0 0 16 16"><rect x="1.500" y="2.500" width="13" height="11" rx="1.500" fill="#3c3e42" stroke="#ced0d6" stroke-width="1"/><path d="M4.200 6l2.300 2-2.300 2M8 10.500h3.500" fill="none" stroke="#ced0d6" stroke-width="1" stroke-linecap="round" stroke-linejoin="round"/></svg>
<span class="t" style="left:336.5px;top:1353.3px;line-height:48px;font:400 27px/48px 'Liberation Sans', sans-serif;color:#d1675a;letter-spacing:0.37px;">mvnw</span>
<svg class="i" style="left:298.0px;top:1408.0px" width="32" height="32" viewBox="0 0 16 16"><path d="M7 1.500h5.500l3 3v9h-8.500z" fill="#dbe9fb" stroke="#7eaee6" stroke-width="0.800"/><path d="M9 5.500h4.500M9 7.500h4.500M9 9.500h4.500" stroke="#5a8fd0" stroke-width="0.800"/><circle cx="5.600" cy="11" r="3.600" fill="#f0a030"/><g stroke="#f0a030" stroke-width="1.800" stroke-linecap="round"><path d="M5.600 6.200v9.600M.800 11h9.600M2.200 7.600l6.800 6.800M9 7.600l-6.800 6.800"/></g><circle cx="5.600" cy="11" r="1.500" fill="#7a4a10"/></svg>
<span class="t" style="left:340.5px;top:1401.3px;line-height:48px;font:400 27px/48px 'Liberation Sans', sans-serif;color:#d1675a;letter-spacing:0.61px;">mvnw.cmd</span>
<svg class="i" style="left:298.0px;top:1456.0px" width="32" height="32" viewBox="0 0 16 16"><text x="8" y="13.800" font-family="Liberation Sans, sans-serif" font-style="italic" font-size="18.5" text-anchor="middle" fill="#548af7" stroke="#548af7" stroke-width=".2">m</text></svg>
<span class="t" style="left:336.5px;top:1449.3px;line-height:48px;font:400 27px/48px 'Liberation Sans', sans-serif;color:#d1675a;letter-spacing:0.14px;">pom.xml</span>
<svg class="i" style="left:222.0px;top:1508.5px" width="24" height="24" viewBox="0 0 24 24"><path d="M5.2 8.6L12 15.4L18.8 8.6" fill="none" stroke="#acafb6" stroke-width="2" stroke-linecap="round" stroke-linejoin="round"/></svg>
<svg class="i" style="left:260.0px;top:1504.0px" width="32" height="32" viewBox="0 0 16 16"><path d="M2.450 13.250V5.850H6.350V2.500H10.650V8.250H14.550V13.250Z" fill="#3c3e42" stroke="#ced0d6" stroke-width="1" stroke-linejoin="round"/><path d="M6.350 5.850V13.250M10.650 8.250V13.250" stroke="#ced0d6" stroke-width="1"/></svg>
<span class="t" style="left:298.5px;top:1497.3px;line-height:48px;font:400 27px/48px 'Liberation Sans', sans-serif;color:#dfe1e5;letter-spacing:0.07px;">External Libraries</span>
<svg class="i" style="left:259.6px;top:1556.3px" width="24" height="24" viewBox="0 0 24 24"><path d="M8.6 5.2L15.4 12L8.6 18.8" fill="none" stroke="#acafb6" stroke-width="2" stroke-linecap="round" stroke-linejoin="round"/></svg>
<svg class="i" style="left:298.0px;top:1552.0px" width="32" height="32" viewBox="0 0 16 16"><path d="M1.5 4A1.5 1.5 0 0 1 3 2.5h2.8a1.5 1.5 0 0 1 1.1.48L8.5 4.5H13A1.5 1.5 0 0 1 14.5 6v1.500H7.300v6H3A1.5 1.5 0 0 1 1.5 12z" fill="#3c3e42"/><path d="M6.800 13.5H3A1.5 1.5 0 0 1 1.5 12V4A1.5 1.5 0 0 1 3 2.5h2.8a1.5 1.5 0 0 1 1.1.48L8.5 4.5H13A1.5 1.5 0 0 1 14.5 6v2.600" fill="none" stroke="#ced0d6" stroke-width="1" stroke-linecap="round"/><path d="M8.500 10.200h6v2.300a3 3 0 0 1-6 0z" fill="#25324d" stroke="#548af7" stroke-width="1" stroke-linejoin="round"/><path d="M14.500 10.600h.6a1.100 1.100 0 0 1 0 2.200h-.7" fill="none" stroke="#548af7" stroke-width="0.900"/></svg>
<span class="t" style="left:336.5px;top:1545.3px;line-height:48px;font:400 27px/48px 'Liberation Sans', sans-serif;color:#dfe1e5;letter-spacing:0.32px;">&lt; openjdk-21 &gt;</span>
<span class="t" style="left:535.8px;top:1545.3px;line-height:48px;font:400 27px/48px 'Liberation Sans', sans-serif;color:#6f737a;letter-spacing:0.37px;">/Users/eve/Library/Java/JavaVirtualMachines/openjdk-21</span>
<svg class="i" style="left:259.6px;top:1604.3px" width="24" height="24" viewBox="0 0 24 24"><path d="M8.6 5.2L15.4 12L8.6 18.8" fill="none" stroke="#acafb6" stroke-width="2" stroke-linecap="round" stroke-linejoin="round"/></svg>
<svg class="i" style="left:298.0px;top:1600.0px" width="32" height="32" viewBox="0 0 16 16"><path d="M1.5 4A1.5 1.5 0 0 1 3 2.5h2.8a1.5 1.5 0 0 1 1.1.48L8.5 4.5H13A1.5 1.5 0 0 1 14.5 6v1.500H7.300v6H3A1.5 1.5 0 0 1 1.5 12z" fill="#3c3e42"/><path d="M6.800 13.5H3A1.5 1.5 0 0 1 1.5 12V4A1.5 1.5 0 0 1 3 2.5h2.8a1.5 1.5 0 0 1 1.1.48L8.5 4.5H13A1.5 1.5 0 0 1 14.5 6v2.600" fill="none" stroke="#ced0d6" stroke-width="1" stroke-linecap="round"/><path d="M8.500 14.500V9.800H10.700V8.500H12.750V10.650H14.550V14.500Z" fill="#1d2740" stroke="#548af7" stroke-width="1" stroke-linejoin="round"/><path d="M10.700 9.800V14.500M12.750 10.650V14.500" stroke="#548af7" stroke-width="1"/></svg>
<span class="t" style="left:336.5px;top:1593.3px;line-height:48px;font:400 27px/48px 'Liberation Sans', sans-serif;color:#dfe1e5;letter-spacing:0.30px;">Maven: ch.qos.logback:logback-classic:1.5.6</span>
<svg class="i" style="left:259.6px;top:1652.3px" width="24" height="24" viewBox="0 0 24 24"><path d="M8.6 5.2L15.4 12L8.6 18.8" fill="none" stroke="#acafb6" stroke-width="2" stroke-linecap="round" stroke-linejoin="round"/></svg>
<svg class="i" style="left:298.0px;top:1648.0px" width="32" height="32" viewBox="0 0 16 16"><path d="M1.5 4A1.5 1.5 0 0 1 3 2.5h2.8a1.5 1.5 0 0 1 1.1.48L8.5 4.5H13A1.5 1.5 0 0 1 14.5 6v1.500H7.300v6H3A1.5 1.5 0 0 1 1.5 12z" fill="#3c3e42"/><path d="M6.800 13.5H3A1.5 1.5 0 0 1 1.5 12V4A1.5 1.5 0 0 1 3 2.5h2.8a1.5 1.5 0 0 1 1.1.48L8.5 4.5H13A1.5 1.5 0 0 1 14.5 6v2.600" fill="none" stroke="#ced0d6" stroke-width="1" stroke-linecap="round"/><path d="M8.500 14.500V9.800H10.700V8.500H12.750V10.650H14.550V14.500Z" fill="#1d2740" stroke="#548af7" stroke-width="1" stroke-linejoin="round"/><path d="M10.700 9.800V14.500M12.750 10.650V14.500" stroke="#548af7" stroke-width="1"/></svg>
<span class="t" style="left:336.5px;top:1641.3px;line-height:48px;font:400 27px/48px 'Liberation Sans', sans-serif;color:#dfe1e5;letter-spacing:0.31px;">Maven: ch.qos.logback:logback-core:1.5.6</span>
<svg class="i" style="left:259.6px;top:1700.3px" width="24" height="24" viewBox="0 0 24 24"><path d="M8.6 5.2L15.4 12L8.6 18.8" fill="none" stroke="#acafb6" stroke-width="2" stroke-linecap="round" stroke-linejoin="round"/></svg>
<svg class="i" style="left:298.0px;top:1696.0px" width="32" height="32" viewBox="0 0 16 16"><path d="M1.5 4A1.5 1.5 0 0 1 3 2.5h2.8a1.5 1.5 0 0 1 1.1.48L8.5 4.5H13A1.5 1.5 0 0 1 14.5 6v1.500H7.300v6H3A1.5 1.5 0 0 1 1.5 12z" fill="#3c3e42"/><path d="M6.800 13.5H3A1.5 1.5 0 0 1 1.5 12V4A1.5 1.5 0 0 1 3 2.5h2.8a1.5 1.5 0 0 1 1.1.48L8.5 4.5H13A1.5 1.5 0 0 1 14.5 6v2.600" fill="none" stroke="#ced0d6" stroke-width="1" stroke-linecap="round"/><path d="M8.500 14.500V9.800H10.700V8.500H12.750V10.650H14.550V14.500Z" fill="#1d2740" stroke="#548af7" stroke-width="1" stroke-linejoin="round"/><path d="M10.700 9.800V14.500M12.750 10.650V14.500" stroke="#548af7" stroke-width="1"/></svg>
<span class="t" style="left:336.5px;top:1689.3px;line-height:48px;font:400 27px/48px 'Liberation Sans', sans-serif;color:#dfe1e5;letter-spacing:0.43px;">Maven: com.fasterxml.jackson.core:jackson-annotations:2.17.1</span>
<svg class="i" style="left:259.6px;top:1748.3px" width="24" height="24" viewBox="0 0 24 24"><path d="M8.6 5.2L15.4 12L8.6 18.8" fill="none" stroke="#acafb6" stroke-width="2" stroke-linecap="round" stroke-linejoin="round"/></svg>
<svg class="i" style="left:298.0px;top:1744.0px" width="32" height="32" viewBox="0 0 16 16"><path d="M1.5 4A1.5 1.5 0 0 1 3 2.5h2.8a1.5 1.5 0 0 1 1.1.48L8.5 4.5H13A1.5 1.5 0 0 1 14.5 6v1.500H7.300v6H3A1.5 1.5 0 0 1 1.5 12z" fill="#3c3e42"/><path d="M6.800 13.5H3A1.5 1.5 0 0 1 1.5 12V4A1.5 1.5 0 0 1 3 2.5h2.8a1.5 1.5 0 0 1 1.1.48L8.5 4.5H13A1.5 1.5 0 0 1 14.5 6v2.600" fill="none" stroke="#ced0d6" stroke-width="1" stroke-linecap="round"/><path d="M8.500 14.500V9.800H10.700V8.500H12.750V10.650H14.550V14.500Z" fill="#1d2740" stroke="#548af7" stroke-width="1" stroke-linejoin="round"/><path d="M10.700 9.800V14.500M12.750 10.650V14.500" stroke="#548af7" stroke-width="1"/></svg>
<span class="t" style="left:336.5px;top:1737.3px;line-height:48px;font:400 27px/48px 'Liberation Sans', sans-serif;color:#dfe1e5;letter-spacing:0.25px;">Maven: com.fasterxml.jackson.core:jackson-core:2.17.1</span>
<svg class="i" style="left:259.6px;top:1796.3px" width="24" height="24" viewBox="0 0 24 24"><path d="M8.6 5.2L15.4 12L8.6 18.8" fill="none" stroke="#acafb6" stroke-width="2" stroke-linecap="round" stroke-linejoin="round"/></svg>
<svg class="i" style="left:298.0px;top:1792.0px" width="32" height="32" viewBox="0 0 16 16"><path d="M1.5 4A1.5 1.5 0 0 1 3 2.5h2.8a1.5 1.5 0 0 1 1.1.48L8.5 4.5H13A1.5 1.5 0 0 1 14.5 6v1.500H7.300v6H3A1.5 1.5 0 0 1 1.5 12z" fill="#3c3e42"/><path d="M6.800 13.5H3A1.5 1.5 0 0 1 1.5 12V4A1.5 1.5 0 0 1 3 2.5h2.8a1.5 1.5 0 0 1 1.1.48L8.5 4.5H13A1.5 1.5 0 0 1 14.5 6v2.600" fill="none" stroke="#ced0d6" stroke-width="1" stroke-linecap="round"/><path d="M8.500 14.500V9.800H10.700V8.500H12.750V10.650H14.550V14.500Z" fill="#1d2740" stroke="#548af7" stroke-width="1" stroke-linejoin="round"/><path d="M10.700 9.800V14.500M12.750 10.650V14.500" stroke="#548af7" stroke-width="1"/></svg>
<span class="t" style="left:336.5px;top:1785.3px;line-height:48px;font:400 27px/48px 'Liberation Sans', sans-serif;color:#dfe1e5;letter-spacing:0.38px;">Maven: com.fasterxml.jackson.core:jackson-databind:2.17.1</span>
<svg class="i" style="left:259.6px;top:1844.3px" width="24" height="24" viewBox="0 0 24 24"><path d="M8.6 5.2L15.4 12L8.6 18.8" fill="none" stroke="#acafb6" stroke-width="2" stroke-linecap="round" stroke-linejoin="round"/></svg>
<svg class="i" style="left:298.0px;top:1840.0px" width="32" height="32" viewBox="0 0 16 16"><path d="M1.5 4A1.5 1.5 0 0 1 3 2.5h2.8a1.5 1.5 0 0 1 1.1.48L8.5 4.5H13A1.5 1.5 0 0 1 14.5 6v1.500H7.300v6H3A1.5 1.5 0 0 1 1.5 12z" fill="#3c3e42"/><path d="M6.800 13.5H3A1.5 1.5 0 0 1 1.5 12V4A1.5 1.5 0 0 1 3 2.5h2.8a1.5 1.5 0 0 1 1.1.48L8.5 4.5H13A1.5 1.5 0 0 1 14.5 6v2.600" fill="none" stroke="#ced0d6" stroke-width="1" stroke-linecap="round"/><path d="M8.500 14.500V9.800H10.700V8.500H12.750V10.650H14.550V14.500Z" fill="#1d2740" stroke="#548af7" stroke-width="1" stroke-linejoin="round"/><path d="M10.700 9.800V14.500M12.750 10.650V14.500" stroke="#548af7" stroke-width="1"/></svg>
<span class="t" style="left:336.5px;top:1833.3px;line-height:48px;font:400 27px/48px 'Liberation Sans', sans-serif;color:#dfe1e5;letter-spacing:0.51px;">Maven: com.fasterxml.jackson.datatype:jackson-datatype-jdk8:2.17.1</span>
<svg class="i" style="left:259.6px;top:1892.3px" width="24" height="24" viewBox="0 0 24 24"><path d="M8.6 5.2L15.4 12L8.6 18.8" fill="none" stroke="#acafb6" stroke-width="2" stroke-linecap="round" stroke-linejoin="round"/></svg>
<svg class="i" style="left:298.0px;top:1888.0px" width="32" height="32" viewBox="0 0 16 16"><path d="M1.5 4A1.5 1.5 0 0 1 3 2.5h2.8a1.5 1.5 0 0 1 1.1.48L8.5 4.5H13A1.5 1.5 0 0 1 14.5 6v1.500H7.300v6H3A1.5 1.5 0 0 1 1.5 12z" fill="#3c3e42"/><path d="M6.800 13.5H3A1.5 1.5 0 0 1 1.5 12V4A1.5 1.5 0 0 1 3 2.5h2.8a1.5 1.5 0 0 1 1.1.48L8.5 4.5H13A1.5 1.5 0 0 1 14.5 6v2.600" fill="none" stroke="#ced0d6" stroke-width="1" stroke-linecap="round"/><path d="M8.500 14.500V9.800H10.700V8.500H12.750V10.650H14.550V14.500Z" fill="#1d2740" stroke="#548af7" stroke-width="1" stroke-linejoin="round"/><path d="M10.700 9.800V14.500M12.750 10.650V14.500" stroke="#548af7" stroke-width="1"/></svg>
<span class="t" style="left:336.5px;top:1881.3px;line-height:48px;font:400 27px/48px 'Liberation Sans', sans-serif;color:#dfe1e5;letter-spacing:0.51px;">Maven: com.fasterxml.jackson.datatype:jackson-datatype-jsr310:2.17.1</span>
<svg class="i" style="left:259.6px;top:1940.3px" width="24" height="24" viewBox="0 0 24 24"><path d="M8.6 5.2L15.4 12L8.6 18.8" fill="none" stroke="#acafb6" stroke-width="2" stroke-linecap="round" stroke-linejoin="round"/></svg>
<svg class="i" style="left:298.0px;top:1936.0px" width="32" height="32" viewBox="0 0 16 16"><path d="M1.5 4A1.5 1.5 0 0 1 3 2.5h2.8a1.5 1.5 0 0 1 1.1.48L8.5 4.5H13A1.5 1.5 0 0 1 14.5 6v1.500H7.300v6H3A1.5 1.5 0 0 1 1.5 12z" fill="#3c3e42"/><path d="M6.800 13.5H3A1.5 1.5 0 0 1 1.5 12V4A1.5 1.5 0 0 1 3 2.5h2.8a1.5 1.5 0 0 1 1.1.48L8.5 4.5H13A1.5 1.5 0 0 1 14.5 6v2.600" fill="none" stroke="#ced0d6" stroke-width="1" stroke-linecap="round"/><path d="M8.500 14.500V9.800H10.700V8.500H12.750V10.650H14.550V14.500Z" fill="#1d2740" stroke="#548af7" stroke-width="1" stroke-linejoin="round"/><path d="M10.700 9.800V14.500M12.750 10.650V14.500" stroke="#548af7" stroke-width="1"/></svg>
<span class="t" style="left:336.5px;top:1929.3px;line-height:48px;font:400 27px/48px 'Liberation Sans', sans-serif;color:#dfe1e5;letter-spacing:0.32px;">Maven: com.fasterxml.jackson.module:jackson-module-parameter-names:2.17.1</span>
<svg class="i" style="left:259.6px;top:1988.3px" width="24" height="24" viewBox="0 0 24 24"><path d="M8.6 5.2L15.4 12L8.6 18.8" fill="none" stroke="#acafb6" stroke-width="2" stroke-linecap="round" stroke-linejoin="round"/></svg>
<svg class="i" style="left:298.0px;top:1984.0px" width="32" height="32" viewBox="0 0 16 16"><path d="M1.5 4A1.5 1.5 0 0 1 3 2.5h2.8a1.5 1.5 0 0 1 1.1.48L8.5 4.5H13A1.5 1.5 0 0 1 14.5 6v1.500H7.300v6H3A1.5 1.5 0 0 1 1.5 12z" fill="#3c3e42"/><path d="M6.800 13.5H3A1.5 1.5 0 0 1 1.5 12V4A1.5 1.5 0 0 1 3 2.5h2.8a1.5 1.5 0 0 1 1.1.48L8.5 4.5H13A1.5 1.5 0 0 1 14.5 6v2.600" fill="none" stroke="#ced0d6" stroke-width="1" stroke-linecap="round"/><path d="M8.500 14.500V9.800H10.700V8.500H12.750V10.650H14.550V14.500Z" fill="#1d2740" stroke="#548af7" stroke-width="1" stroke-linejoin="round"/><path d="M10.700 9.800V14.500M12.750 10.650V14.500" stroke="#548af7" stroke-width="1"/></svg>
<span class="t" style="left:336.5px;top:1977.3px;line-height:48px;font:400 27px/48px 'Liberation Sans', sans-serif;color:#dfe1e5;letter-spacing:0.16px;">Maven: com.fasterxml:classmate:1.7.0</span>
<svg class="i" style="left:259.6px;top:2036.3px" width="24" height="24" viewBox="0 0 24 24"><path d="M8.6 5.2L15.4 12L8.6 18.8" fill="none" stroke="#acafb6" stroke-width="2" stroke-linecap="round" stroke-linejoin="round"/></svg>
<svg class="i" style="left:298.0px;top:2032.0px" width="32" height="32" viewBox="0 0 16 16"><path d="M1.5 4A1.5 1.5 0 0 1 3 2.5h2.8a1.5 1.5 0 0 1 1.1.48L8.5 4.5H13A1.5 1.5 0 0 1 14.5 6v1.500H7.300v6H3A1.5 1.5 0 0 1 1.5 12z" fill="#3c3e42"/><path d="M6.800 13.5H3A1.5 1.5 0 0 1 1.5 12V4A1.5 1.5 0 0 1 3 2.5h2.8a1.5 1.5 0 0 1 1.1.48L8.5 4.5H13A1.5 1.5 0 0 1 14.5 6v2.600" fill="none" stroke="#ced0d6" stroke-width="1" stroke-linecap="round"/><path d="M8.500 14.500V9.800H10.700V8.500H12.750V10.650H14.550V14.500Z" fill="#1d2740" stroke="#548af7" stroke-width="1" stroke-linejoin="round"/><path d="M10.700 9.800V14.500M12.750 10.650V14.500" stroke="#548af7" stroke-width="1"/></svg>
<span class="t" style="left:336.5px;top:2025.3px;line-height:48px;font:400 27px/48px 'Liberation Sans', sans-serif;color:#dfe1e5;letter-spacing:0.46px;">Maven: com.google.protobuf:protobuf-java:3.6.1</span>
<svg class="i" style="left:259.6px;top:2084.3px" width="24" height="24" viewBox="0 0 24 24"><path d="M8.6 5.2L15.4 12L8.6 18.8" fill="none" stroke="#acafb6" stroke-width="2" stroke-linecap="round" stroke-linejoin="round"/></svg>
<svg class="i" style="left:298.0px;top:2080.0px" width="32" height="32" viewBox="0 0 16 16"><path d="M1.5 4A1.5 1.5 0 0 1 3 2.5h2.8a1.5 1.5 0 0 1 1.1.48L8.5 4.5H13A1.5 1.5 0 0 1 14.5 6v1.500H7.300v6H3A1.5 1.5 0 0 1 1.5 12z" fill="#3c3e42"/><path d="M6.800 13.5H3A1.5 1.5 0 0 1 1.5 12V4A1.5 1.5 0 0 1 3 2.5h2.8a1.5 1.5 0 0 1 1.1.48L8.5 4.5H13A1.5 1.5 0 0 1 14.5 6v2.600" fill="none" stroke="#ced0d6" stroke-width="1" stroke-linecap="round"/><path d="M8.500 14.500V9.800H10.700V8.500H12.750V10.650H14.550V14.500Z" fill="#1d2740" stroke="#548af7" stroke-width="1" stroke-linejoin="round"/><path d="M10.700 9.800V14.500M12.750 10.650V14.500" stroke="#548af7" stroke-width="1"/></svg>
<span class="t" style="left:336.5px;top:2073.3px;line-height:48px;font:400 27px/48px 'Liberation Sans', sans-serif;color:#dfe1e5;letter-spacing:0.43px;">Maven: com.jayway.jsonpath:json-path:2.9.0</span>
<svg class="i" style="left:259.6px;top:2132.3px" width="24" height="24" viewBox="0 0 24 24"><path d="M8.6 5.2L15.4 12L8.6 18.8" fill="none" stroke="#acafb6" stroke-width="2" stroke-linecap="round" stroke-linejoin="round"/></svg>
<svg class="i" style="left:298.0px;top:2128.0px" width="32" height="32" viewBox="0 0 16 16"><path d="M1.5 4A1.5 1.5 0 0 1 3 2.5h2.8a1.5 1.5 0 0 1 1.1.48L8.5 4.5H13A1.5 1.5 0 0 1 14.5 6v1.500H7.300v6H3A1.5 1.5 0 0 1 1.5 12z" fill="#3c3e42"/><path d="M6.800 13.5H3A1.5 1.5 0 0 1 1.5 12V4A1.5 1.5 0 0 1 3 2.5h2.8a1.5 1.5 0 0 1 1.1.48L8.5 4.5H13A1.5 1.5 0 0 1 14.5 6v2.600" fill="none" stroke="#ced0d6" stroke-width="1" stroke-linecap="round"/><path d="M8.500 14.500V9.800H10.700V8.500H12.750V10.650H14.550V14.500Z" fill="#1d2740" stroke="#548af7" stroke-width="1" stroke-linejoin="round"/><path d="M10.700 9.800V14.500M12.750 10.650V14.500" stroke="#548af7" stroke-width="1"/></svg>
<span class="t" style="left:336.5px;top:2121.3px;line-height:48px;font:400 27px/48px 'Liberation Sans', sans-serif;color:#dfe1e5;letter-spacing:0.37px;">Maven: com.sun.istack:istack-commons-runtime:4.1.2</span>
<svg class="i" style="left:259.6px;top:2180.3px" width="24" height="24" viewBox="0 0 24 24"><path d="M8.6 5.2L15.4 12L8.6 18.8" fill="none" stroke="#acafb6" stroke-width="2" stroke-linecap="round" stroke-linejoin="round"/></svg>
<svg class="i" style="left:298.0px;top:2176.0px" width="32" height="32" viewBox="0 0 16 16"><path d="M1.5 4A1.5 1.5 0 0 1 3 2.5h2.8a1.5 1.5 0 0 1 1.1.48L8.5 4.5H13A1.5 1.5 0 0 1 14.5 6v1.500H7.300v6H3A1.5 1.5 0 0 1 1.5 12z" fill="#3c3e42"/><path d="M6.800 13.5H3A1.5 1.5 0 0 1 1.5 12V4A1.5 1.5 0 0 1 3 2.5h2.8a1.5 1.5 0 0 1 1.1.48L8.5 4.5H13A1.5 1.5 0 0 1 14.5 6v2.600" fill="none" stroke="#ced0d6" stroke-width="1" stroke-linecap="round"/><path d="M8.500 14.500V9.800H10.700V8.500H12.750V10.650H14.550V14.500Z" fill="#1d2740" stroke="#548af7" stroke-width="1" stroke-linejoin="round"/><path d="M10.700 9.800V14.500M12.750 10.650V14.500" stroke="#548af7" stroke-width="1"/></svg>
<span class="t" style="left:336.5px;top:2169.3px;line-height:48px;font:400 27px/48px 'Liberation Sans', sans-serif;color:#dfe1e5;letter-spacing:0.39px;">Maven: com.vaadin.external.google:android-json:0.0.20131108.vaadin1</span>
<svg class="i" style="left:259.6px;top:2228.3px" width="24" height="24" viewBox="0 0 24 24"><path d="M8.6 5.2L15.4 12L8.6 18.8" fill="none" stroke="#acafb6" stroke-width="2" stroke-linecap="round" stroke-linejoin="round"/></svg>
<svg class="i" style="left:298.0px;top:2224.0px" width="32" height="32" viewBox="0 0 16 16"><path d="M1.5 4A1.5 1.5 0 0 1 3 2.5h2.8a1.5 1.5 0 0 1 1.1.48L8.5 4.5H13A1.5 1.5 0 0 1 14.5 6v1.500H7.300v6H3A1.5 1.5 0 0 1 1.5 12z" fill="#3c3e42"/><path d="M6.800 13.5H3A1.5 1.5 0 0 1 1.5 12V4A1.5 1.5 0 0 1 3 2.5h2.8a1.5 1.5 0 0 1 1.1.48L8.5 4.5H13A1.5 1.5 0 0 1 14.5 6v2.600" fill="none" stroke="#ced0d6" stroke-width="1" stroke-linecap="round"/><path d="M8.500 14.500V9.800H10.700V8.500H12.750V10.650H14.550V14.500Z" fill="#1d2740" stroke="#548af7" stroke-width="1" stroke-linejoin="round"/><path d="M10.700 9.800V14.500M12.750 10.650V14.500" stroke="#548af7" stroke-width="1"/></svg>
<span class="t" style="left:336.5px;top:2217.3px;line-height:48px;font:400 27px/48px 'Liberation Sans', sans-serif;color:#dfe1e5;letter-spacing:-0.01px;">Maven: com.zaxxer:HikariCP:5.1.0</span>
<svg class="i" style="left:259.6px;top:2276.3px" width="24" height="24" viewBox="0 0 24 24"><path d="M8.6 5.2L15.4 12L8.6 18.8" fill="none" stroke="#acafb6" stroke-width="2" stroke-linecap="round" stroke-linejoin="round"/></svg>
<svg class="i" style="left:298.0px;top:2272.0px" width="32" height="32" viewBox="0 0 16 16"><path d="M1.5 4A1.5 1.5 0 0 1 3 2.5h2.8a1.5 1.5 0 0 1 1.1.48L8.5 4.5H13A1.5 1.5 0 0 1 14.5 6v1.500H7.300v6H3A1.5 1.5 0 0 1 1.5 12z" fill="#3c3e42"/><path d="M6.800 13.5H3A1.5 1.5 0 0 1 1.5 12V4A1.5 1.5 0 0 1 3 2.5h2.8a1.5 1.5 0 0 1 1.1.48L8.5 4.5H13A1.5 1.5 0 0 1 14.5 6v2.600" fill="none" stroke="#ced0d6" stroke-width="1" stroke-linecap="round"/><path d="M8.500 14.500V9.800H10.700V8.500H12.750V10.650H14.550V14.500Z" fill="#1d2740" stroke="#548af7" stroke-width="1" stroke-linejoin="round"/><path d="M10.700 9.800V14.500M12.750 10.650V14.500" stroke="#548af7" stroke-width="1"/></svg>
<span class="t" style="left:336.5px;top:2265.3px;line-height:48px;font:400 27px/48px 'Liberation Sans', sans-serif;color:#dfe1e5;letter-spacing:0.18px;">Maven: io.micrometer:micrometer-commons:1.13.1</span>
<svg class="i" style="left:259.6px;top:2324.3px" width="24" height="24" viewBox="0 0 24 24"><path d="M8.6 5.2L15.4 12L8.6 18.8" fill="none" stroke="#acafb6" stroke-width="2" stroke-linecap="round" stroke-linejoin="round"/></svg>
<svg class="i" style="left:298.0px;top:2320.0px" width="32" height="32" viewBox="0 0 16 16"><path d="M1.5 4A1.5 1.5 0 0 1 3 2.5h2.8a1.5 1.5 0 0 1 1.1.48L8.5 4.5H13A1.5 1.5 0 0 1 14.5 6v1.500H7.300v6H3A1.5 1.5 0 0 1 1.5 12z" fill="#3c3e42"/><path d="M6.800 13.5H3A1.5 1.5 0 0 1 1.5 12V4A1.5 1.5 0 0 1 3 2.5h2.8a1.5 1.5 0 0 1 1.1.48L8.5 4.5H13A1.5 1.5 0 0 1 14.5 6v2.600" fill="none" stroke="#ced0d6" stroke-width="1" stroke-linecap="round"/><path d="M8.500 14.500V9.800H10.700V8.500H12.750V10.650H14.550V14.500Z" fill="#1d2740" stroke="#548af7" stroke-width="1" stroke-linejoin="round"/><path d="M10.700 9.800V14.500M12.750 10.650V14.500" stroke="#548af7" stroke-width="1"/></svg>
<span class="t" style="left:336.5px;top:2313.3px;line-height:48px;font:400 27px/48px 'Liberation Sans', sans-serif;color:#dfe1e5;letter-spacing:0.24px;">Maven: io.micrometer:micrometer-observation:1.13.1</span>
<svg class="i" style="left:259.6px;top:2372.3px" width="24" height="24" viewBox="0 0 24 24"><path d="M8.6 5.2L15.4 12L8.6 18.8" fill="none" stroke="#acafb6" stroke-width="2" stroke-linecap="round" stroke-linejoin="round"/></svg>
<svg class="i" style="left:298.0px;top:2368.0px" width="32" height="32" viewBox="0 0 16 16"><path d="M1.5 4A1.5 1.5 0 0 1 3 2.5h2.8a1.5 1.5 0 0 1 1.1.48L8.5 4.5H13A1.5 1.5 0 0 1 14.5 6v1.500H7.300v6H3A1.5 1.5 0 0 1 1.5 12z" fill="#3c3e42"/><path d="M6.800 13.5H3A1.5 1.5 0 0 1 1.5 12V4A1.5 1.5 0 0 1 3 2.5h2.8a1.5 1.5 0 0 1 1.1.48L8.5 4.5H13A1.5 1.5 0 0 1 14.5 6v2.600" fill="none" stroke="#ced0d6" stroke-width="1" stroke-linecap="round"/><path d="M8.500 14.500V9.800H10.700V8.500H12.750V10.650H14.550V14.500Z" fill="#1d2740" stroke="#548af7" stroke-width="1" stroke-linejoin="round"/><path d="M10.700 9.800V14.500M12.750 10.650V14.500" stroke="#548af7" stroke-width="1"/></svg>
<span class="t" style="left:336.5px;top:2361.3px;line-height:48px;font:400 27px/48px 'Liberation Sans', sans-serif;color:#dfe1e5;letter-spacing:0.03px;">Maven: io.smallrye:jandex:3.1.2</span>
<svg class="i" style="left:259.6px;top:2420.3px" width="24" height="24" viewBox="0 0 24 24"><path d="M8.6 5.2L15.4 12L8.6 18.8" fill="none" stroke="#acafb6" stroke-width="2" stroke-linecap="round" stroke-linejoin="round"/></svg>
<svg class="i" style="left:298.0px;top:2416.0px" width="32" height="32" viewBox="0 0 16 16"><path d="M1.5 4A1.5 1.5 0 0 1 3 2.5h2.8a1.5 1.5 0 0 1 1.1.48L8.5 4.5H13A1.5 1.5 0 0 1 14.5 6v1.500H7.300v6H3A1.5 1.5 0 0 1 1.5 12z" fill="#3c3e42"/><path d="M6.800 13.5H3A1.5 1.5 0 0 1 1.5 12V4A1.5 1.5 0 0 1 3 2.5h2.8a1.5 1.5 0 0 1 1.1.48L8.5 4.5H13A1.5 1.5 0 0 1 14.5 6v2.600" fill="none" stroke="#ced0d6" stroke-width="1" stroke-linecap="round"/><path d="M8.500 14.500V9.800H10.700V8.500H12.750V10.650H14.550V14.500Z" fill="#1d2740" stroke="#548af7" stroke-width="1" stroke-linejoin="round"/><path d="M10.700 9.800V14.500M12.750 10.650V14.500" stroke="#548af7" stroke-width="1"/></svg>
<span class="t" style="left:336.5px;top:2409.3px;line-height:48px;font:400 27px/48px 'Liberation Sans', sans-serif;color:#dfe1e5;letter-spacing:0.33px;">Maven: jakarta.activation:jakarta.activation-api:2.1.3</span>
<svg class="i" style="left:259.6px;top:2468.3px" width="24" height="24" viewBox="0 0 24 24"><path d="M8.6 5.2L15.4 12L8.6 18.8" fill="none" stroke="#acafb6" stroke-width="2" stroke-linecap="round" stroke-linejoin="round"/></svg>
<svg class="i" style="left:298.0px;top:2464.0px" width="32" height="32" viewBox="0 0 16 16"><path d="M1.5 4A1.5 1.5 0 0 1 3 2.5h2.8a1.5 1.5 0 0 1 1.1.48L8.5 4.5H13A1.5 1.5 0 0 1 14.5 6v1.500H7.300v6H3A1.5 1.5 0 0 1 1.5 12z" fill="#3c3e42"/><path d="M6.800 13.5H3A1.5 1.5 0 0 1 1.5 12V4A1.5 1.5 0 0 1 3 2.5h2.8a1.5 1.5 0 0 1 1.1.48L8.5 4.5H13A1.5 1.5 0 0 1 14.5 6v2.600" fill="none" stroke="#ced0d6" stroke-width="1" stroke-linecap="round"/><path d="M8.500 14.500V9.800H10.700V8.500H12.750V10.650H14.550V14.500Z" fill="#1d2740" stroke="#548af7" stroke-width="1" stroke-linejoin="round"/><path d="M10.700 9.800V14.500M12.750 10.650V14.500" stroke="#548af7" stroke-width="1"/></svg>
<span class="t" style="left:336.5px;top:2457.3px;line-height:48px;font:400 27px/48px 'Liberation Sans', sans-serif;color:#dfe1e5;letter-spacing:0.20px;">Maven: jakarta.annotation:jakarta.annotation-api:2.1.1</span>
<svg class="i" style="left:259.6px;top:2516.3px" width="24" height="24" viewBox="0 0 24 24"><path d="M8.6 5.2L15.4 12L8.6 18.8" fill="none" stroke="#acafb6" stroke-width="2" stroke-linecap="round" stroke-linejoin="round"/></svg>
<svg class="i" style="left:298.0px;top:2512.0px" width="32" height="32" viewBox="0 0 16 16"><path d="M1.5 4A1.5 1.5 0 0 1 3 2.5h2.8a1.5 1.5 0 0 1 1.1.48L8.5 4.5H13A1.5 1.5 0 0 1 14.5 6v1.500H7.300v6H3A1.5 1.5 0 0 1 1.5 12z" fill="#3c3e42"/><path d="M6.800 13.5H3A1.5 1.5 0 0 1 1.5 12V4A1.5 1.5 0 0 1 3 2.5h2.8a1.5 1.5 0 0 1 1.1.48L8.5 4.5H13A1.5 1.5 0 0 1 14.5 6v2.600" fill="none" stroke="#ced0d6" stroke-width="1" stroke-linecap="round"/><path d="M8.500 14.500V9.800H10.700V8.500H12.750V10.650H14.550V14.500Z" fill="#1d2740" stroke="#548af7" stroke-width="1" stroke-linejoin="round"/><path d="M10.700 9.800V14.500M12.750 10.650V14.500" stroke="#548af7" stroke-width="1"/></svg>
<span class="t" style="left:336.5px;top:2505.3px;line-height:48px;font:400 27px/48px 'Liberation Sans', sans-serif;color:#dfe1e5;letter-spacing:0.28px;">Maven: jakarta.inject:jakarta.inject-api:2.0.1</span>
<svg class="i" style="left:259.6px;top:2564.3px" width="24" height="24" viewBox="0 0 24 24"><path d="M8.6 5.2L15.4 12L8.6 18.8" fill="none" stroke="#acafb6" stroke-width="2" stroke-linecap="round" stroke-linejoin="round"/></svg>
<svg class="i" style="left:298.0px;top:2560.0px" width="32" height="32" viewBox="0 0 16 16"><path d="M1.5 4A1.5 1.5 0 0 1 3 2.5h2.8a1.5 1.5 0 0 1 1.1.48L8.5 4.5H13A1.5 1.5 0 0 1 14.5 6v1.500H7.300v6H3A1.5 1.5 0 0 1 1.5 12z" fill="#3c3e42"/><path d="M6.800 13.5H3A1.5 1.5 0 0 1 1.5 12V4A1.5 1.5 0 0 1 3 2.5h2.8a1.5 1.5 0 0 1 1.1.48L8.5 4.5H13A1.5 1.5 0 0 1 14.5 6v2.600" fill="none" stroke="#ced0d6" stroke-width="1" stroke-linecap="round"/><path d="M8.500 14.500V9.800H10.700V8.500H12.750V10.650H14.550V14.500Z" fill="#1d2740" stroke="#548af7" stroke-width="1" stroke-linejoin="round"/><path d="M10.700 9.800V14.500M12.750 10.650V14.500" stroke="#548af7" stroke-width="1"/></svg>
<span class="t" style="left:336.5px;top:2553.3px;line-height:48px;font:400 27px/48px 'Liberation Sans', sans-serif;color:#dfe1e5;letter-spacing:0.12px;">Maven: jakarta.persistence:jakarta.persistence-api:3.1.0</span>
</div></div>
<div class="b" style="left:994px;top:157px;width:2106px;height:2418px;background:#1c1d1f;"></div>
<div class="b" style="left:994px;top:238px;width:2105px;height:2px;background:#393b40;"></div>
<div class="b" style="left:994px;top:157px;width:2105px;height:80px;overflow:hidden"><div style="position:absolute;left:-994px;top:-157px">
<span class="t" style="left:956.5px;top:175.4px;line-height:48px;font:400 27px/48px 'Liberation Sans', sans-serif;color:#75761a;letter-spacing:-0.29px;">HELP.md</span>
</div></div>
<div class="b" style="left:994px;top:160px;width:15px;height:76px;background:linear-gradient(90deg,#1c1d1f 0,#1c1d1f 8px,rgba(28,29,31,0) 15px);"></div>
<svg class="i" style="left:1153.0px;top:182.0px;opacity:.78" width="32" height="32" viewBox="0 0 16 16"><circle cx="8" cy="8" r="6.5" fill="#25324d" stroke="#548af7" stroke-width="1"/><text x="8.05" y="11.45" font-family="Liberation Sans, sans-serif" font-size="9.6" text-anchor="middle" fill="#548af7" stroke="#548af7" stroke-width=".25">C</text><circle cx="12.400" cy="12.450" r="4.100" fill="#1c1d1f"/><path d="M10.470 10.150a3 3 0 1 0 3.860 0" fill="none" stroke="#c3c5cb" stroke-width=".850" stroke-linecap="round"/><path d="M12.400 8.700v3.300" stroke="#c3c5cb" stroke-width=".850" stroke-linecap="round"/></svg>
<span class="t" style="left:1194.5px;top:175.4px;line-height:48px;font:400 27px/48px 'Liberation Sans', sans-serif;color:#b95c52;letter-spacing:0.31px;">StaybookingApplication.java</span>
<svg class="i" style="left:1626.0px;top:182.0px;opacity:.78" width="32" height="32" viewBox="0 0 16 16"><text x="8" y="13.800" font-family="Liberation Sans, sans-serif" font-style="italic" font-size="18.5" text-anchor="middle" fill="#548af7" stroke="#548af7" stroke-width=".2">m</text></svg>
<span class="t" style="left:1668.5px;top:175.4px;line-height:48px;font:400 27px/48px 'Liberation Sans', sans-serif;color:#b95c52;letter-spacing:0.30px;">pom.xml (staybooking)</span>
<svg class="i" style="left:2035.0px;top:182.0px;opacity:.78" width="32" height="32" viewBox="0 0 16 16"><g transform="translate(-.3 .9) scale(1.06)"><path d="M13.2 1.8c.4 2.4.9 5.2-.3 7.6-1.2 2.5-4 3.7-7 3.6-1.4 0-2.8-.4-3.6-1.2C.9 10.400 1 8.200 2.400 6.700 4.300 4.700 8 5.300 10.600 4.300c1.200-.5 2-1.400 2.600-2.500z" fill="#253627" stroke="#57965c" stroke-width="1" stroke-linejoin="round"/><path d="M2.300 13.2c1.800-.2 3.400-.8 4.800-1.800" fill="none" stroke="#57965c" stroke-width="1" stroke-linecap="round"/></g><circle cx="12.400" cy="12.450" r="4.100" fill="#1c1d1f"/><path d="M10.470 10.150a3 3 0 1 0 3.860 0" fill="none" stroke="#c3c5cb" stroke-width=".850" stroke-linecap="round"/><path d="M12.400 8.700v3.300" stroke="#c3c5cb" stroke-width=".850" stroke-linecap="round"/></svg>
<span class="t" style="left:2075.5px;top:175.4px;line-height:48px;font:400 27px/48px 'Liberation Sans', sans-serif;color:#b95c52;letter-spacing:0.47px;">application.properties</span>
<svg class="i" style="left:2428.0px;top:182.0px;opacity:.78" width="32" height="32" viewBox="0 0 16 16"><circle cx="8" cy="8" r="6.5" fill="#25324d" stroke="#548af7" stroke-width="1"/><text x="8" y="11.75" font-family="Liberation Sans, sans-serif" font-size="10.4" text-anchor="middle" fill="#548af7" stroke="#548af7" stroke-width=".25">E</text></svg>
<span class="t" style="left:2470.0px;top:175.4px;line-height:48px;font:400 27px/48px 'Liberation Sans', sans-serif;color:#b95c52;letter-spacing:-0.20px;">UserRole.java</span>
<svg class="i" style="left:2724.0px;top:182.0px" width="32" height="32" viewBox="0 0 16 16"><circle cx="8" cy="8" r="6.5" fill="#25324d" stroke="#548af7" stroke-width="1"/><text x="8.05" y="11.45" font-family="Liberation Sans, sans-serif" font-size="9.6" text-anchor="middle" fill="#548af7" stroke="#548af7" stroke-width=".25">C</text></svg>
<span class="t" style="left:2766.5px;top:175.4px;line-height:48px;font:400 27px/48px 'Liberation Sans', sans-serif;color:#d9695c;letter-spacing:0.10px;">User.java</span>
<svg class="i" style="left:2902.0px;top:189.0px" width="20" height="20" viewBox="0 0 20 20"><path d="M3.500 3.500l13 13M16.500 3.500l-13 13" stroke="#868a91" stroke-width="2" stroke-linecap="round"/></svg>
<div class="b" style="left:2700px;top:234px;width:244px;height:6px;background:#3574f0;border-radius:3px"></div>
<svg class="i" style="left:2996.0px;top:187.0px" width="24" height="24" viewBox="0 0 24 24"><path d="M2.5 7.25L12 16.75L21.5 7.25" fill="none" stroke="#ced0d6" stroke-width="2" stroke-linecap="round" stroke-linejoin="round"/></svg>
<svg class="i" style="left:3040.0px;top:178.0px" width="40" height="40" viewBox="0 0 20 20"><circle cx="10" cy="5" r="1.250" fill="#ced0d6"/><circle cx="10" cy="10" r="1.250" fill="#ced0d6"/><circle cx="10" cy="15" r="1.250" fill="#ced0d6"/></svg>
<div class="b" style="left:996px;top:1210px;width:2103px;height:44px;background:#232428;"></div>
<div class="b" style="left:1144.5px;top:240px;width:1.5px;height:2335px;background:#313438;"></div>
<div class="b" style="left:3022.5px;top:240px;width:1.5px;height:4px;background:#313438;"></div>
<div class="b" style="left:3022.5px;top:288px;width:1.5px;height:2287px;background:#313438;"></div>
<div class="b" style="left:1209.2px;top:240px;width:1.2px;height:46px;background:#313438;"></div>
<div class="b" style="left:1209.2px;top:462px;width:1.2px;height:88px;background:#313438;"></div>
<div class="b" style="left:1209.2px;top:726px;width:1.2px;height:1496px;background:#313438;"></div>
<div class="b" style="left:1271.7px;top:1342px;width:1.2px;height:88px;background:#313438;"></div>
<div class="b" style="left:1271.7px;top:1606px;width:1.2px;height:88px;background:#313438;"></div>
<div class="b" style="left:1271.7px;top:1870px;width:1.2px;height:88px;background:#313438;"></div>
<div class="b" style="left:1271.7px;top:2134px;width:1.2px;height:44px;background:#313438;"></div>
<div class="t n" style="left:996px;top:243.7px;width:61.500px;color:#4b5059">59</div>
<div class="t c" style="left:1149.4px;top:243.7px"><span style="color:#bcbec4">        </span><span style="color:#cf8e6d">return</span><span style="color:#bcbec4"> </span><span style="color:#c77dbb">enabled</span><span style="color:#bcbec4">;</span></div>
<div class="t n" style="left:996px;top:287.7px;width:61.500px;color:#4b5059">60</div>
<div class="t c" style="left:1149.4px;top:287.7px"><span style="color:#bcbec4">    }</span></div>
<div class="t n" style="left:996px;top:331.7px;width:61.500px;color:#4b5059">61</div>
<span class="t" style="left:1212.4px;top:374.6px;line-height:44px;font:400 25px/44px 'Liberation Sans', sans-serif;color:#7a7e85;letter-spacing:-0.06px;">no usages</span>
<div class="t n" style="left:996px;top:419.7px;width:61.500px;color:#4b5059">62</div>
<div class="t c" style="left:1149.4px;top:419.7px"><span style="color:#bcbec4">    </span><span style="color:#cf8e6d">public</span><span style="color:#bcbec4"> User </span><span style="color:#6f737a">setEnabled</span><span style="color:#bcbec4">(</span><span style="color:#cf8e6d">boolean</span><span style="color:#bcbec4"> enabled){</span></div>
<div class="t n" style="left:996px;top:463.7px;width:61.500px;color:#4b5059">63</div>
<div class="t c" style="left:1149.4px;top:463.7px"><span style="color:#bcbec4">        </span><span style="color:#cf8e6d">this</span><span style="color:#bcbec4">.</span><span style="color:#c77dbb">enabled</span><span style="color:#bcbec4"> = enabled;</span></div>
<div class="t n" style="left:996px;top:507.7px;width:61.500px;color:#4b5059">64</div>
<div class="t c" style="left:1149.4px;top:507.7px"><span style="color:#bcbec4">        </span><span style="color:#cf8e6d">return</span><span style="color:#bcbec4"> </span><span style="color:#cf8e6d">this</span><span style="color:#bcbec4">;</span></div>
<div class="t n" style="left:996px;top:551.7px;width:61.500px;color:#4b5059">65</div>
<div class="t c" style="left:1149.4px;top:551.7px"><span style="color:#bcbec4">    }</span></div>
<div class="t n" style="left:996px;top:595.7px;width:61.500px;color:#4b5059">66</div>
<span class="t" style="left:1212.4px;top:638.6px;line-height:44px;font:400 25px/44px 'Liberation Sans', sans-serif;color:#7a7e85;letter-spacing:0.00px;">5 usages</span>
<div class="t n" style="left:996px;top:683.7px;width:61.500px;color:#4b5059">67</div>
<div class="t c" style="left:1149.4px;top:683.7px"><span style="color:#bcbec4">    </span><span style="color:#cf8e6d">public</span><span style="color:#bcbec4"> </span><span style="color:#cf8e6d">static</span><span style="color:#bcbec4"> </span><span style="color:#cf8e6d">class</span><span style="color:#bcbec4"> Builder {</span></div>
<span class="t" style="left:1274.8px;top:726.6px;line-height:44px;font:400 25px/44px 'Liberation Sans', sans-serif;color:#7a7e85;letter-spacing:0.00px;">2 usages</span>
<div class="t n" style="left:996px;top:771.7px;width:61.500px;color:#4b5059">68</div>
<div class="t c" style="left:1149.4px;top:771.7px"><span style="color:#bcbec4">        </span><span style="color:#b3ae60">@JsonProperty</span><span style="color:#bcbec4">(</span><span style="color:#6aab73">"username"</span><span style="color:#bcbec4">)</span></div>
<div class="t n" style="left:996px;top:815.7px;width:61.500px;color:#4b5059">69</div>
<div class="t c" style="left:1149.4px;top:815.7px"><span style="color:#bcbec4">        </span><span style="color:#cf8e6d">private</span><span style="color:#bcbec4"> </span><span style="color:#bcbec4">String</span><span style="color:#bcbec4"> </span><span style="color:#c77dbb">username</span><span style="color:#bcbec4">;</span></div>
<div class="t n" style="left:996px;top:859.7px;width:61.500px;color:#4b5059">70</div>
<span class="t" style="left:1274.8px;top:902.6px;line-height:44px;font:400 25px/44px 'Liberation Sans', sans-serif;color:#7a7e85;letter-spacing:0.00px;">2 usages</span>
<div class="t n" style="left:996px;top:947.7px;width:61.500px;color:#4b5059">71</div>
<div class="t c" style="left:1149.4px;top:947.7px"><span style="color:#bcbec4">        </span><span style="color:#b3ae60">@JsonProperty</span><span style="color:#bcbec4">(</span><span style="color:#6aab73">"password"</span><span style="color:#bcbec4">)</span></div>
<div class="t n" style="left:996px;top:991.7px;width:61.500px;color:#4b5059">72</div>
<div class="t c" style="left:1149.4px;top:991.7px"><span style="color:#bcbec4">        </span><span style="color:#cf8e6d">private</span><span style="color:#bcbec4"> </span><span style="color:#bcbec4">String</span><span style="color:#bcbec4"> </span><span style="color:#c77dbb">password</span><span style="color:#bcbec4">;</span></div>
<div class="t n" style="left:996px;top:1035.7px;width:61.500px;color:#4b5059">73</div>
<span class="t" style="left:1274.8px;top:1078.6px;line-height:44px;font:400 25px/44px 'Liberation Sans', sans-serif;color:#7a7e85;letter-spacing:0.00px;">2 usages</span>
<div class="t n" style="left:996px;top:1123.7px;width:61.500px;color:#4b5059">74</div>
<div class="t c" style="left:1149.4px;top:1123.7px"><span style="color:#bcbec4">        </span><span style="color:#b3ae60">@JsonProperty</span><span style="color:#bcbec4">(</span><span style="color:#6aab73">"enabled"</span><span style="color:#bcbec4">)</span></div>
<div class="t n" style="left:996px;top:1167.7px;width:61.500px;color:#4b5059">75</div>
<div class="t c" style="left:1149.4px;top:1167.7px"><span style="color:#bcbec4">        </span><span style="color:#cf8e6d">private</span><span style="color:#bcbec4"> </span><span style="color:#cf8e6d">boolean</span><span style="color:#bcbec4"> </span><span style="color:#c77dbb">enabled</span><span style="color:#bcbec4">;</span></div>
<div class="t n" style="left:996px;top:1211.7px;width:61.500px;color:#a1a3ab">76</div>
<span class="t" style="left:1274.8px;top:1254.6px;line-height:44px;font:400 25px/44px 'Liberation Sans', sans-serif;color:#7a7e85;letter-spacing:-0.06px;">no usages</span>
<div class="t n" style="left:996px;top:1299.7px;width:61.500px;color:#4b5059">77</div>
<div class="t c" style="left:1149.4px;top:1299.7px"><span style="color:#bcbec4">        </span><span style="color:#cf8e6d">public</span><span style="color:#bcbec4"> Builder </span><span style="color:#6f737a">setUsername</span><span style="color:#bcbec4">(</span><span style="color:#bcbec4">String</span><span style="color:#bcbec4"> username){</span></div>
<div class="t n" style="left:996px;top:1343.7px;width:61.500px;color:#4b5059">78</div>
<div class="t c" style="left:1149.4px;top:1343.7px"><span style="color:#bcbec4">            </span><span style="color:#cf8e6d">this</span><span style="color:#bcbec4">.</span><span style="color:#c77dbb">username</span><span style="color:#bcbec4"> = username;</span></div>
<div class="t n" style="left:996px;top:1387.7px;width:61.500px;color:#4b5059">79</div>
<div class="t c" style="left:1149.4px;top:1387.7px"><span style="color:#bcbec4">            </span><span style="color:#cf8e6d">return</span><span style="color:#bcbec4"> </span><span style="color:#cf8e6d">this</span><span style="color:#bcbec4">;</span></div>
<div class="t n" style="left:996px;top:1431.7px;width:61.500px;color:#4b5059">80</div>
<div class="t c" style="left:1149.4px;top:1431.7px"><span style="color:#bcbec4">        }</span></div>
<div class="t n" style="left:996px;top:1475.7px;width:61.500px;color:#4b5059">81</div>
<span class="t" style="left:1274.8px;top:1518.6px;line-height:44px;font:400 25px/44px 'Liberation Sans', sans-serif;color:#7a7e85;letter-spacing:-0.06px;">no usages</span>
<div class="t n" style="left:996px;top:1563.7px;width:61.500px;color:#4b5059">82</div>
<div class="t c" style="left:1149.4px;top:1563.7px"><span style="color:#bcbec4">        </span><span style="color:#cf8e6d">public</span><span style="color:#bcbec4"> Builder </span><span style="color:#6f737a">setPassword</span><span style="color:#bcbec4">(</span><span style="color:#bcbec4">String</span><span style="color:#bcbec4"> password){</span></div>
<div class="t n" style="left:996px;top:1607.7px;width:61.500px;color:#4b5059">83</div>
<div class="t c" style="left:1149.4px;top:1607.7px"><span style="color:#bcbec4">            </span><span style="color:#cf8e6d">this</span><span style="color:#bcbec4">.</span><span style="color:#c77dbb">password</span><span style="color:#bcbec4"> = password;</span></div>
<div class="t n" style="left:996px;top:1651.7px;width:61.500px;color:#4b5059">84</div>
<div class="t c" style="left:1149.4px;top:1651.7px"><span style="color:#bcbec4">            </span><span style="color:#cf8e6d">return</span><span style="color:#bcbec4"> </span><span style="color:#cf8e6d">this</span><span style="color:#bcbec4">;</span></div>
<div class="t n" style="left:996px;top:1695.7px;width:61.500px;color:#4b5059">85</div>
<div class="t c" style="left:1149.4px;top:1695.7px"><span style="color:#bcbec4">        }</span></div>
<div class="t n" style="left:996px;top:1739.7px;width:61.500px;color:#4b5059">86</div>
<span class="t" style="left:1274.8px;top:1782.6px;line-height:44px;font:400 25px/44px 'Liberation Sans', sans-serif;color:#7a7e85;letter-spacing:-0.06px;">no usages</span>
<div class="t n" style="left:996px;top:1827.7px;width:61.500px;color:#4b5059">87</div>
<div class="t c" style="left:1149.4px;top:1827.7px"><span style="color:#bcbec4">        </span><span style="color:#cf8e6d">public</span><span style="color:#bcbec4"> Builder </span><span style="color:#6f737a">setEnabled</span><span style="color:#bcbec4">(</span><span style="color:#cf8e6d">boolean</span><span style="color:#bcbec4"> enabled){</span></div>
<div class="t n" style="left:996px;top:1871.7px;width:61.500px;color:#4b5059">88</div>
<div class="t c" style="left:1149.4px;top:1871.7px"><span style="color:#bcbec4">            </span><span style="color:#cf8e6d">this</span><span style="color:#bcbec4">.</span><span style="color:#c77dbb">enabled</span><span style="color:#bcbec4"> = enabled;</span></div>
<div class="t n" style="left:996px;top:1915.7px;width:61.500px;color:#4b5059">89</div>
<div class="t c" style="left:1149.4px;top:1915.7px"><span style="color:#bcbec4">            </span><span style="color:#cf8e6d">return</span><span style="color:#bcbec4"> </span><span style="color:#cf8e6d">this</span><span style="color:#bcbec4">;</span></div>
<div class="t n" style="left:996px;top:1959.7px;width:61.500px;color:#4b5059">90</div>
<div class="t c" style="left:1149.4px;top:1959.7px"><span style="color:#bcbec4">        }</span></div>
<div class="t n" style="left:996px;top:2003.7px;width:61.500px;color:#4b5059">91</div>
<span class="t" style="left:1274.8px;top:2046.6px;line-height:44px;font:400 25px/44px 'Liberation Sans', sans-serif;color:#7a7e85;letter-spacing:-0.06px;">no usages</span>
<div class="t n" style="left:996px;top:2091.7px;width:61.500px;color:#4b5059">92</div>
<div class="t c" style="left:1149.4px;top:2091.7px"><span style="color:#bcbec4">        </span><span style="color:#cf8e6d">public</span><span style="color:#bcbec4"> User </span><span style="color:#6f737a">build</span><span style="color:#bcbec4">(){</span></div>
<div class="t n" style="left:996px;top:2135.7px;width:61.500px;color:#4b5059">93</div>
<div class="t c" style="left:1149.4px;top:2135.7px"><span style="color:#bcbec4">            </span><span style="color:#cf8e6d">return</span><span style="color:#bcbec4"> </span><span style="color:#cf8e6d">new</span><span style="color:#bcbec4"> User(</span></div>
<div class="b" style="left:1590px;top:2138px;width:103.6px;height:36px;background:#27282b;border-radius:8px"></div>
<span class="t" style="left:1601.0px;top:2133.5px;line-height:44px;font:400 25px/44px 'Liberation Sans', sans-serif;color:#868a91;letter-spacing:0.25px;">builder:</span>
<div class="t c" style="left:1698.200px;top:2135.7px"><span style="color:#cf8e6d">this</span><span style="color:#bcbec4">);</span></div>
<div class="t n" style="left:996px;top:2179.7px;width:61.500px;color:#4b5059">94</div>
<div class="t c" style="left:1149.4px;top:2179.7px"><span style="color:#bcbec4">        }</span></div>
<div class="t n" style="left:996px;top:2223.7px;width:61.500px;color:#4b5059">95</div>
<div class="t c" style="left:1149.4px;top:2223.7px"><span style="color:#bcbec4">    }</span></div>
<div class="t n" style="left:996px;top:2267.7px;width:61.500px;color:#4b5059">96</div>
<div class="t c" style="left:1149.4px;top:2267.7px"><span style="color:#bcbec4">}</span></div>
<div class="t n" style="left:996px;top:2311.7px;width:61.500px;color:#4b5059">97</div>
<svg class="i" style="left:2947.8px;top:254.6px" width="25" height="23.2" viewBox="0 0 28 26"><path d="M14 1.600c.8 0 1.500.4 1.900 1.100l10.800 19.200c.8 1.400-.2 3.100-1.900 3.100H3.200c-1.700 0-2.700-1.700-1.900-3.100L12.100 2.700c.4-.7 1.100-1.100 1.900-1.100z" fill="#c9a14e"/><path d="M14 8.500v8" stroke="#1c1d1f" stroke-width="2.800" stroke-linecap="round"/><circle cx="14" cy="20.800" r="1.700" fill="#1c1d1f"/></svg>
<span class="t" style="left:2977.5px;top:246.5px;line-height:40px;font:400 24px/40px 'Liberation Sans', sans-serif;color:#bcbec4;letter-spacing:-1.35px;">12</span>
<svg class="i" style="left:3020.0px;top:254.0px" width="24" height="24" viewBox="0 0 24 24"><path d="M5.2 15.4L12 8.6L18.8 15.4" fill="none" stroke="#acafb6" stroke-width="2" stroke-linecap="round" stroke-linejoin="round"/></svg>
<svg class="i" style="left:3062.0px;top:255.0px" width="24" height="24" viewBox="0 0 24 24"><path d="M5.2 8.6L12 15.4L18.8 8.6" fill="none" stroke="#acafb6" stroke-width="2" stroke-linecap="round" stroke-linejoin="round"/></svg>
<div class="b" style="left:3078px;top:1578px;width:14px;height:993px;background:rgba(255,255,255,.115);border-radius:7px"></div>
<div class="b" style="left:3070px;top:536px;width:28px;height:4px;background:#c29a4e;"></div>
<div class="b" style="left:3070px;top:612px;width:28px;height:4px;background:#c29a4e;"></div>
<div class="b" style="left:3070px;top:1102px;width:28px;height:4px;background:#c29a4e;"></div>
<div class="b" style="left:3070px;top:1234px;width:28px;height:4px;background:#c29a4e;"></div>
<div class="b" style="left:3070px;top:1348px;width:28px;height:4px;background:#c29a4e;"></div>
<div class="b" style="left:3070px;top:1442px;width:28px;height:4px;background:#c29a4e;"></div>
<div class="b" style="left:3070px;top:1554px;width:28px;height:4px;background:#c29a4e;"></div>
<div class="b" style="left:3070px;top:1648px;width:28px;height:4px;background:#c29a4e;"></div>
<div class="b" style="left:3070px;top:2025px;width:28px;height:4px;background:#c29a4e;"></div>
<div class="b" style="left:3070px;top:2139px;width:28px;height:4px;background:#c29a4e;"></div>
<div class="b" style="left:3070px;top:2252px;width:28px;height:4px;background:#c29a4e;"></div>
<div class="b" style="left:3070px;top:2366px;width:28px;height:4px;background:#c29a4e;"></div>
<div class="b" style="left:3100px;top:157px;width:80px;height:2418px;background:#27282b;"></div>
<div class="b" style="left:3099px;top:157px;width:1.5px;height:2418px;background:#1c1d1f;"></div>
<svg class="i" style="left:3120.0px;top:178.0px" width="40" height="40" viewBox="0 0 20 20"><path d="M4.700 10.500V6.800a5.300 5.300 0 0 1 10.600 0V10.500L17.500 14.050a.800.800 0 0 1-.700 1.200H3.200a.800.800 0 0 1-.700-1.200z" fill="none" stroke="#ced0d6" stroke-width="1.400" stroke-linecap="round" stroke-linejoin="round"/><path d="M7.900 16.900H12.100A2.100 2.200 0 0 1 7.900 16.900z" fill="#ced0d6"/></svg>
<svg class="i" style="left:3120.0px;top:258.0px" width="40" height="40" viewBox="0 0 20 20"><ellipse cx="10" cy="4.400" rx="7.350" ry="2.900" fill="none" stroke="#ced0d6" stroke-width="1.400" stroke-linecap="round" stroke-linejoin="round"/><path d="M2.650 4.400v11c0 1.600 3.300 2.900 7.350 2.900s7.350-1.300 7.350-2.900v-11M2.650 8.070c0 1.600 3.300 2.900 7.350 2.900s7.350-1.300 7.350-2.900M2.650 11.730c0 1.600 3.300 2.900 7.350 2.900s7.350-1.300 7.350-2.900" fill="none" stroke="#ced0d6" stroke-width="1.400" stroke-linecap="round" stroke-linejoin="round"/></svg>
<svg class="i" style="left:3120.0px;top:338.0px" width="40" height="40" viewBox="0 0 20 20"><path d="M.300 12.600C.300 10.600 1.600 9.200 3.200 8.400H16.800C18.400 9.200 19.700 10.600 19.700 12.600 19.700 16 15.500 18.450 10 18.450S.300 16 .300 12.600z" fill="#ced0d6"/><path d="M4.050 9.500H15.950V14.550C14.300 15.600 12.200 16.150 10 16.150S5.700 15.600 4.050 14.550z" fill="#27282b"/><rect x="7" y="10.950" width="1.800" height="4.050" rx=".900" fill="#ced0d6"/><rect x="11.2" y="10.950" width="1.800" height="4.050" rx=".900" fill="#ced0d6"/><rect x="3" y="2.200" width="6.200" height="6.900" rx="2.900" fill="#27282b" stroke="#ced0d6" stroke-width="1.500"/><rect x="10.800" y="2.200" width="6.200" height="6.900" rx="2.900" fill="#27282b" stroke="#ced0d6" stroke-width="1.500"/></svg>
<svg class="i" style="left:3120.0px;top:418.0px" width="40" height="40" viewBox="0 0 20 20"><text transform="translate(10 16.700) scale(.93 1)" font-family="Liberation Sans, sans-serif" font-style="italic" font-size="24" text-anchor="middle" fill="#ced0d6">m</text></svg>
<svg class="i" style="left:3120.0px;top:498.0px" width="40" height="40" viewBox="0 0 20 20"><defs><linearGradient id="cb" x1="0" y1="0" x2="0" y2="1"><stop offset="0" stop-color="#13a9ff"/><stop offset="1" stop-color="#0a62ff"/></linearGradient></defs><path d="M9.900 1.700a8.350 8.350 0 1 1-3.900 15.730c-1.100.500-2.500.700-3.900.650.900-.900 1.400-1.900 1.500-3A8.350 8.350 0 0 1 9.900 1.700z" fill="url(#cb)"/><circle cx="10.050" cy="9.900" r="1.100" fill="#173f8f"/><circle cx="13.800" cy="9.900" r="1.100" fill="#173f8f"/></svg>
<svg class="i" style="left:3120.0px;top:578.0px" width="40" height="40" viewBox="0 0 20 20"><path d="M.300 12.600C.300 10.600 1.600 9.200 3.200 8.400H16.800C18.400 9.200 19.700 10.600 19.700 12.600 19.700 16 15.500 18.450 10 18.450S.300 16 .300 12.600z" fill="#ced0d6"/><path d="M4.050 9.500H15.950V14.550C14.300 15.600 12.200 16.150 10 16.150S5.700 15.600 4.050 14.550z" fill="#27282b"/><rect x="7" y="10.950" width="1.800" height="4.050" rx=".900" fill="#ced0d6"/><rect x="3" y="2.200" width="6.200" height="6.900" rx="2.900" fill="#27282b" stroke="#ced0d6" stroke-width="1.500"/><rect x="10.800" y="2.200" width="6.200" height="6.900" rx="2.900" fill="#27282b" stroke="#ced0d6" stroke-width="1.500"/><path d="M8.900 8.500h11.100v11.500h-11.100z" fill="#27282b"/><path d="M11.900 9.800h6.100a1.700 1.700 0 0 1 1.700 1.700v3.900a1.700 1.700 0 0 1-1.700 1.700h-.400l-.300 2.100-2.700-2.100h-2.700a1.700 1.700 0 0 1-1.700-1.700v-3.900a1.700 1.700 0 0 1 1.700-1.700z" fill="#ced0d6"/></svg>
<div class="b" style="left:112px;top:2575px;width:3068px;height:59px;background:#27282b;"></div>
<div class="b" style="left:112px;top:2574.5px;width:3068px;height:1.5px;background:#1c1d1f;"></div>
<svg class="i" style="left:139.0px;top:2593.0px" width="18" height="18" viewBox="0 0 18 18"><rect x="1.500" y="2.500" width="14" height="14" rx="3.500" fill="#25324d" stroke="#548af7" stroke-width="2"/></svg>
<span class="t" style="left:164.0px;top:2579.4px;line-height:48px;font:400 27px/48px 'Liberation Sans', sans-serif;color:#9da0a8;letter-spacing:0.49px;">staybooking</span>
<span class="t" style="left:363.5px;top:2579.4px;line-height:48px;font:400 27px/48px 'Liberation Sans', sans-serif;color:#9da0a8;letter-spacing:0.57px;">src</span>
<span class="t" style="left:450.2px;top:2579.4px;line-height:48px;font:400 27px/48px 'Liberation Sans', sans-serif;color:#9da0a8;letter-spacing:-0.13px;">main</span>
<span class="t" style="left:558.3px;top:2579.4px;line-height:48px;font:400 27px/48px 'Liberation Sans', sans-serif;color:#9da0a8;letter-spacing:-0.33px;">java</span>
<span class="t" style="left:655.5px;top:2579.4px;line-height:48px;font:400 27px/48px 'Liberation Sans', sans-serif;color:#9da0a8;letter-spacing:0.33px;">com</span>
<span class="t" style="left:757.5px;top:2579.4px;line-height:48px;font:400 27px/48px 'Liberation Sans', sans-serif;color:#9da0a8;letter-spacing:0.15px;">eve</span>
<span class="t" style="left:851.5px;top:2579.4px;line-height:48px;font:400 27px/48px 'Liberation Sans', sans-serif;color:#9da0a8;letter-spacing:0.54px;">staybooking</span>
<span class="t" style="left:1051.8px;top:2579.4px;line-height:48px;font:400 27px/48px 'Liberation Sans', sans-serif;color:#9da0a8;letter-spacing:0.29px;">model</span>
<svg class="i" style="left:328.0px;top:2591.5px" width="24" height="24" viewBox="0 0 24 24"><path d="M8.5 5.0L15.5 12L8.5 19.0" fill="none" stroke="#868a91" stroke-width="2" stroke-linecap="round" stroke-linejoin="round"/></svg>
<svg class="i" style="left:413.0px;top:2591.5px" width="24" height="24" viewBox="0 0 24 24"><path d="M8.5 5.0L15.5 12L8.5 19.0" fill="none" stroke="#868a91" stroke-width="2" stroke-linecap="round" stroke-linejoin="round"/></svg>
<svg class="i" style="left:521.5px;top:2591.5px" width="24" height="24" viewBox="0 0 24 24"><path d="M8.5 5.0L15.5 12L8.5 19.0" fill="none" stroke="#868a91" stroke-width="2" stroke-linecap="round" stroke-linejoin="round"/></svg>
<svg class="i" style="left:619.5px;top:2591.5px" width="24" height="24" viewBox="0 0 24 24"><path d="M8.5 5.0L15.5 12L8.5 19.0" fill="none" stroke="#868a91" stroke-width="2" stroke-linecap="round" stroke-linejoin="round"/></svg>
<svg class="i" style="left:720.7px;top:2591.5px" width="24" height="24" viewBox="0 0 24 24"><path d="M8.5 5.0L15.5 12L8.5 19.0" fill="none" stroke="#868a91" stroke-width="2" stroke-linecap="round" stroke-linejoin="round"/></svg>
<svg class="i" style="left:815.6px;top:2591.5px" width="24" height="24" viewBox="0 0 24 24"><path d="M8.5 5.0L15.5 12L8.5 19.0" fill="none" stroke="#868a91" stroke-width="2" stroke-linecap="round" stroke-linejoin="round"/></svg>
<svg class="i" style="left:1016.0px;top:2591.5px" width="24" height="24" viewBox="0 0 24 24"><path d="M8.5 5.0L15.5 12L8.5 19.0" fill="none" stroke="#868a91" stroke-width="2" stroke-linecap="round" stroke-linejoin="round"/></svg>
<svg class="i" style="left:1140.0px;top:2591.5px" width="24" height="24" viewBox="0 0 24 24"><path d="M8.5 5.0L15.5 12L8.5 19.0" fill="none" stroke="#868a91" stroke-width="2" stroke-linecap="round" stroke-linejoin="round"/></svg>
<svg class="i" style="left:1285.5px;top:2591.5px" width="24" height="24" viewBox="0 0 24 24"><path d="M8.5 5.0L15.5 12L8.5 19.0" fill="none" stroke="#868a91" stroke-width="2" stroke-linecap="round" stroke-linejoin="round"/></svg>
<svg class="i" style="left:1176.0px;top:2587.0px" width="32" height="32" viewBox="0 0 16 16"><circle cx="8" cy="8" r="6.5" fill="#25324d" stroke="#548af7" stroke-width="1"/><text x="8.05" y="11.45" font-family="Liberation Sans, sans-serif" font-size="9.6" text-anchor="middle" fill="#548af7" stroke="#548af7" stroke-width=".25">C</text></svg>
<span class="t" style="left:1216.5px;top:2579.4px;line-height:48px;font:400 27px/48px 'Liberation Sans', sans-serif;color:#9da0a8;letter-spacing:-0.18px;">User</span>
<svg class="i" style="left:1322.0px;top:2587.0px" width="32" height="32" viewBox="0 0 16 16"><circle cx="8" cy="8" r="6.5" fill="#25324d" stroke="#548af7" stroke-width="1"/><text x="8.05" y="11.45" font-family="Liberation Sans, sans-serif" font-size="9.6" text-anchor="middle" fill="#548af7" stroke="#548af7" stroke-width=".25">C</text></svg>
<span class="t" style="left:1362.5px;top:2579.4px;line-height:48px;font:400 27px/48px 'Liberation Sans', sans-serif;color:#9da0a8;letter-spacing:0.04px;">Builder</span>
<svg class="i" style="left:2586.5px;top:2590.0px" width="26" height="26" viewBox="0 0 26 26"><defs><linearGradient id="vg" x1="0.1" y1="0" x2="0.6" y2="1"><stop offset="0" stop-color="#3fd34c"/><stop offset=".5" stop-color="#18b0a8"/><stop offset="1" stop-color="#1479f6"/></linearGradient></defs><path d="M0 0h9.500l1 15L19.500 0H26L11.500 26H1z" fill="url(#vg)"/></svg>
<span class="t" style="left:2647.5px;top:2579.4px;line-height:48px;font:400 27px/48px 'Liberation Sans', sans-serif;color:#9da0a8;letter-spacing:-0.64px;">76:1</span>
<span class="t" style="left:2730.5px;top:2579.4px;line-height:48px;font:400 27px/48px 'Liberation Sans', sans-serif;color:#9da0a8;letter-spacing:-1.51px;">LF</span>
<span class="t" style="left:2791.5px;top:2579.4px;line-height:48px;font:400 27px/48px 'Liberation Sans', sans-serif;color:#9da0a8;letter-spacing:0.42px;">UTF-8</span>
<svg class="i" style="left:2905.0px;top:2589.5px" width="30" height="30" viewBox="0 0 20 20"><path d="M.300 12.600C.300 10.600 1.600 9.200 3.200 8.400H16.800C18.400 9.200 19.700 10.600 19.700 12.600 19.700 16 15.500 18.450 10 18.450S.300 16 .300 12.600z" fill="#ced0d6"/><path d="M4.050 9.500H15.950V14.550C14.300 15.600 12.200 16.150 10 16.150S5.700 15.600 4.050 14.550z" fill="#27282b"/><rect x="7" y="10.950" width="1.800" height="4.050" rx=".900" fill="#ced0d6"/><rect x="11.2" y="10.950" width="1.800" height="4.050" rx=".900" fill="#ced0d6"/><rect x="3" y="2.200" width="6.200" height="6.900" rx="2.900" fill="#27282b" stroke="#ced0d6" stroke-width="1.500"/><rect x="10.800" y="2.200" width="6.200" height="6.900" rx="2.900" fill="#27282b" stroke="#ced0d6" stroke-width="1.500"/></svg>
<span class="t" style="left:2968.5px;top:2579.4px;line-height:48px;font:400 27px/48px 'Liberation Sans', sans-serif;color:#9da0a8;letter-spacing:0.24px;">4 spaces</span>
<svg class="i" style="left:3116.0px;top:2588.0px" width="30" height="30" viewBox="0 0 30 30"><rect x="3.300" y="13.900" width="17.600" height="12.400" rx="3" fill="none" stroke="#ced0d6" stroke-width="2" stroke-linecap="round" stroke-linejoin="round"/><path d="M12.100 18.600v3.200" fill="none" stroke="#ced0d6" stroke-width="2" stroke-linecap="round" stroke-linejoin="round"/><path d="M15 13.500V10.800a6.200 6.200 0 0 1 12.400 0v1.400" fill="none" stroke="#ced0d6" stroke-width="2" stroke-linecap="round" stroke-linejoin="round"/></svg>
</div></div>
<div id="rim"></div>
</body></html>
